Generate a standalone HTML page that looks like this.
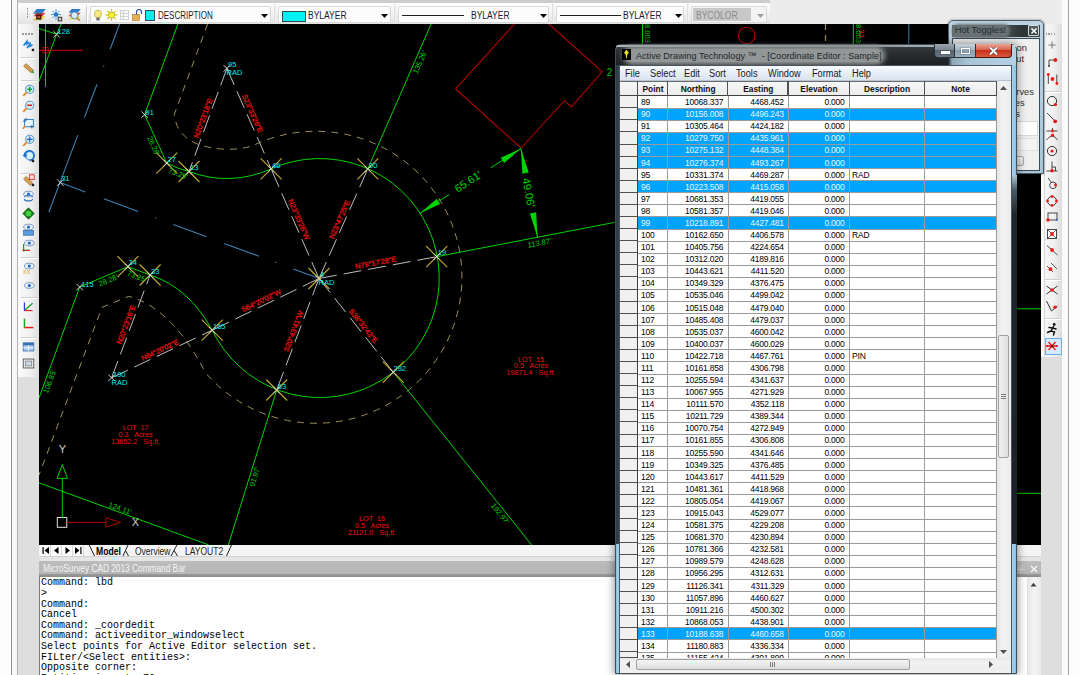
<!DOCTYPE html>
<html><head><meta charset="utf-8"><style>
html,body{margin:0;padding:0;}
body{width:1080px;height:675px;overflow:hidden;position:relative;font-family:'Liberation Sans', sans-serif;}
</style></head><body>
<div style="position:absolute;left:0px;top:0px;width:11px;height:675px;background:#fdfdfd"></div><div style="position:absolute;left:11px;top:0px;width:1px;height:675px;background:#8e8e8e"></div><div style="position:absolute;left:12px;top:0px;width:5px;height:675px;background:#f8f8f8"></div><div style="position:absolute;left:17px;top:0px;width:1px;height:675px;background:#b0b0b0"></div><div style="position:absolute;left:18px;top:0px;width:1044px;height:675px;background:#dedede"></div><div style="position:absolute;left:1062px;top:0px;width:6px;height:675px;background:#fbfbfb"></div><div style="position:absolute;left:1068px;top:0px;width:1px;height:675px;background:#a0a0a0"></div><div style="position:absolute;left:1069px;top:0px;width:11px;height:675px;background:#fdfdfd"></div><div style="position:absolute;left:18px;top:0px;width:1044px;height:24px;background:#ececec"></div><div style="position:absolute;left:18px;top:0px;width:752px;height:3px;background:#cdcdcd"></div><div style="position:absolute;left:18px;top:3px;width:752px;height:21px;background:linear-gradient(#fdfdfd,#f4f4f4 45%,#e2e2e2);border-radius:0 3px 0 0"></div><div style="position:absolute;left:26.5px;top:8.0px;width:1.5px;height:1.5px;background:#9a9a9a"></div><div style="position:absolute;left:26.5px;top:10.7px;width:1.5px;height:1.5px;background:#9a9a9a"></div><div style="position:absolute;left:26.5px;top:13.4px;width:1.5px;height:1.5px;background:#9a9a9a"></div><div style="position:absolute;left:26.5px;top:16.1px;width:1.5px;height:1.5px;background:#9a9a9a"></div><svg style="position:absolute;left:32px;top:7px" width="16" height="15" viewBox="0 0 16 15">
<path d="M1.5 12.5 L4.5 9 L13.5 9 L10.5 12.5Z" fill="#ecd848"/><path d="M1.5 12.5 L10.5 12.5 L10.2 13.3 L1.2 13.3Z" fill="#b89a20"/>
<path d="M1.5 9.2 L4.5 5.8 L13.5 5.8 L10.5 9.2Z" fill="#e43a30"/>
<path d="M1.5 5.8 L4.8 2 L13.8 2 L10.5 5.8Z" fill="#2a7ac8"/><path d="M1.5 5.8 L10.5 5.8 L10.2 6.6 L1.2 6.6Z" fill="#185a9a"/>
<rect x="4.3" y="7.6" width="5" height="4.8" fill="#101010"/><rect x="5.4" y="8.7" width="2.8" height="2.6" fill="#e04030"/></svg><svg style="position:absolute;left:51px;top:8px" width="12" height="14" viewBox="0 0 12 14">
<g stroke="#4aa0e8" stroke-width="1"><line x1="5" y1="1" x2="5" y2="12"/><line x1="0" y1="6.5" x2="10" y2="6.5"/><line x1="1.5" y1="3" x2="8.5" y2="10"/><line x1="8.5" y1="3" x2="1.5" y2="10"/></g>
<circle cx="5" cy="6.5" r="2" fill="#1a70c8"/><rect x="6.8" y="8.8" width="4.4" height="4.6" fill="#303030"/><rect x="7.8" y="9.8" width="2.4" height="2.6" fill="#d8d8d8"/></svg><svg style="position:absolute;left:67px;top:7px" width="15" height="15" viewBox="0 0 15 15">
<path d="M1.5 12.5 L4.5 9 L13.5 9 L10.5 12.5Z" fill="#ecd848"/>
<path d="M1.5 9.2 L4.5 5.8 L13.5 5.8 L10.5 9.2Z" fill="#e43a30"/>
<path d="M1.5 5.8 L4.8 2 L13.8 2 L10.5 5.8Z" fill="#2a7ac8"/>
<circle cx="7.5" cy="8.3" r="3.4" fill="#d8eefa" stroke="#5a90b8" stroke-width="1"/><line x1="9.8" y1="10.6" x2="12.8" y2="13.6" stroke="#c08838" stroke-width="1.8"/></svg><div style="position:absolute;left:86px;top:6px;width:1px;height:17px;background:#c8c8c8;box-shadow:1px 0 0 #fff"></div><div style="position:absolute;left:90px;top:6px;width:181px;height:17px;background:#fcfcfc;border:1px solid #dadada;box-sizing:border-box;border-radius:1px"></div><svg style="position:absolute;left:93px;top:9px" width="62" height="13" viewBox="0 0 62 13">
<ellipse cx="5" cy="5" rx="3.6" ry="4" fill="#f4ec80" stroke="#b0a040" stroke-width="0.6"/><rect x="3.3" y="8.5" width="3.4" height="3" fill="#707070"/>
<g transform="translate(18.5,6)"><circle r="3" fill="#f0e020" stroke="#606000" stroke-width="0.6"/><g stroke="#d8c800" stroke-width="1.2"><line x1="0" y1="-6" x2="0" y2="6"/><line x1="-6" y1="0" x2="6" y2="0"/><line x1="-4.2" y1="-4.2" x2="4.2" y2="4.2"/><line x1="4.2" y1="-4.2" x2="-4.2" y2="4.2"/></g><circle r="2.6" fill="#f8f040"/></g>
<g transform="translate(27,1)" stroke="#c8c8c8" stroke-width="0.8" fill="none"><rect x="0.5" y="0.5" width="8" height="9"/><line x1="0.5" y1="3.5" x2="8.5" y2="3.5"/><line x1="0.5" y1="6.5" x2="8.5" y2="6.5"/><line x1="3.5" y1="0.5" x2="3.5" y2="9.5"/></g>
<g transform="translate(39,0)"><path d="M4.5 6 V3 A2.5 2.5 0 0 1 9.5 3 V5" stroke="#3050a0" stroke-width="1.2" fill="none"/><rect x="0.5" y="5.5" width="7" height="6" fill="#e8b050" stroke="#a07020" stroke-width="0.6"/></g>
<rect x="52.5" y="1.5" width="9" height="10" fill="#00f0f0" stroke="#305060" stroke-width="1"/></svg><div style="position:absolute;left:157.5px;top:9.8px;white-space:nowrap;font-family:'Liberation Sans', sans-serif;font-size:10px;color:#1a1a2a;line-height:12px;transform:scaleX(0.8);transform-origin:0 0">DESCRIPTION</div><svg style="position:absolute;left:261px;top:13.5px" width="7" height="4"><path d="M0 0 L7 0 L3.5 4 Z" fill="#000"/></svg><div style="position:absolute;left:273.5px;top:4px;width:2px;height:19px;background:linear-gradient(90deg,#d8d8d8,#f8f8f8)"></div><div style="position:absolute;left:278px;top:6px;width:113px;height:17px;background:#fcfcfc;border:1px solid #dadada;box-sizing:border-box;border-radius:1px"></div><div style="position:absolute;left:281.5px;top:10.5px;width:22px;height:9px;background:#00f2f2;border:1px solid #2a4a4a"></div><div style="position:absolute;left:307.5px;top:9.8px;white-space:nowrap;font-family:'Liberation Sans', sans-serif;font-size:10px;color:#1a1a2a;line-height:12px;transform:scaleX(0.85);transform-origin:0 0">BYLAYER</div><svg style="position:absolute;left:381px;top:13.5px" width="7" height="4"><path d="M0 0 L7 0 L3.5 4 Z" fill="#000"/></svg><div style="position:absolute;left:393.5px;top:4px;width:2px;height:19px;background:linear-gradient(90deg,#d8d8d8,#f8f8f8)"></div><div style="position:absolute;left:398px;top:6px;width:151px;height:17px;background:#fcfcfc;border:1px solid #dadada;box-sizing:border-box;border-radius:1px"></div><div style="position:absolute;left:402px;top:14.5px;width:62px;height:1px;background:#202020"></div><div style="position:absolute;left:470.5px;top:9.8px;white-space:nowrap;font-family:'Liberation Sans', sans-serif;font-size:10px;color:#1a1a2a;line-height:12px;transform:scaleX(0.85);transform-origin:0 0">BYLAYER</div><svg style="position:absolute;left:539.5px;top:13.5px" width="7" height="4"><path d="M0 0 L7 0 L3.5 4 Z" fill="#000"/></svg><div style="position:absolute;left:551.5px;top:4px;width:2px;height:19px;background:linear-gradient(90deg,#d8d8d8,#f8f8f8)"></div><div style="position:absolute;left:556px;top:6px;width:128px;height:17px;background:#fcfcfc;border:1px solid #dadada;box-sizing:border-box;border-radius:1px"></div><div style="position:absolute;left:560px;top:14.5px;width:61px;height:1px;background:#202020"></div><div style="position:absolute;left:623px;top:9.8px;white-space:nowrap;font-family:'Liberation Sans', sans-serif;font-size:10px;color:#1a1a2a;line-height:12px;transform:scaleX(0.85);transform-origin:0 0">BYLAYER</div><svg style="position:absolute;left:674.5px;top:13.5px" width="7" height="4"><path d="M0 0 L7 0 L3.5 4 Z" fill="#000"/></svg><div style="position:absolute;left:686.5px;top:4px;width:2px;height:19px;background:linear-gradient(90deg,#d8d8d8,#f8f8f8)"></div><div style="position:absolute;left:691px;top:6px;width:76px;height:17px;background:#f4f4f4;border:1px solid #dadada;box-sizing:border-box;border-radius:1px"></div><div style="position:absolute;left:693px;top:8px;width:58px;height:13px;background:#c8c8c8"></div><div style="position:absolute;left:695.5px;top:9.8px;white-space:nowrap;font-family:'Liberation Sans', sans-serif;font-size:10px;color:#8a8a8a;line-height:12px;transform:scaleX(0.85);transform-origin:0 0">BYCOLOR</div><svg style="position:absolute;left:757px;top:13.5px" width="7" height="4"><path d="M0 0 L7 0 L3.5 4 Z" fill="#a0a0a0"/></svg><div style="position:absolute;left:18px;top:24px;width:21px;height:353px;background:linear-gradient(90deg,#fbfbfb,#f0f0f0 60%,#dcdcdc)"></div><div style="position:absolute;left:22px;top:33px;width:1.5px;height:1.5px;background:#9a9a9a"></div><div style="position:absolute;left:25px;top:33px;width:1.5px;height:1.5px;background:#9a9a9a"></div><div style="position:absolute;left:28px;top:33px;width:1.5px;height:1.5px;background:#9a9a9a"></div><div style="position:absolute;left:31px;top:33px;width:1.5px;height:1.5px;background:#9a9a9a"></div><svg style="position:absolute;left:22.0px;top:38.5px" width="13" height="13" viewBox="0 0 16 16"><path d="M2 8 L6 3 L6 6 L9 4" stroke="#2080e0" stroke-width="2" fill="none"/><path d="M6 11 L10 6 L10 9 L13 7" stroke="#2080e0" stroke-width="2" fill="none"/><rect x="12" y="12" width="3" height="3" fill="#202020"/></svg><div style="position:absolute;left:21px;top:57px;width:16px;height:1px;background:#d0d0d0;box-shadow:0 1px 0 #fff"></div><svg style="position:absolute;left:22.0px;top:61.5px" width="13" height="13" viewBox="0 0 16 16"><path d="M2 5 L5 2 L14 10 L11 13 Z" fill="#d4a050" stroke="#8a6020" stroke-width="0.8"/><path d="M11 13 L14 10 L15 14 Z" fill="#40a040"/></svg><div style="position:absolute;left:21px;top:80px;width:16px;height:1px;background:#d0d0d0;box-shadow:0 1px 0 #fff"></div><svg style="position:absolute;left:22.0px;top:83.5px" width="13" height="13" viewBox="0 0 16 16"><circle cx="9.5" cy="6.5" r="5" fill="#d8eef8" stroke="#4a90c8" stroke-width="1.2"/><line x1="6" y1="10" x2="1.5" y2="14.5" stroke="#e08a30" stroke-width="2.2"/><path d="M9.5 3.5 V9.5 M6.5 6.5 H12.5" stroke="#10a030" stroke-width="2"/></svg><svg style="position:absolute;left:22.0px;top:100.0px" width="13" height="13" viewBox="0 0 16 16"><circle cx="9.5" cy="6.5" r="5" fill="#d8eef8" stroke="#4a90c8" stroke-width="1.2"/><line x1="6" y1="10" x2="1.5" y2="14.5" stroke="#e08a30" stroke-width="2.2"/><path d="M6.5 6.5 H12.5" stroke="#e02020" stroke-width="2"/></svg><svg style="position:absolute;left:22.0px;top:116.5px" width="13" height="13" viewBox="0 0 16 16"><rect x="3" y="3" width="11" height="9" fill="#e8f4fc" stroke="#3080c0" stroke-width="1.2"/><path d="M1 5 H5 M5 1 V5 M12 14 V10 M10 12 H15" stroke="#2060a0" stroke-width="1"/><line x1="4" y1="11" x2="1" y2="14.5" stroke="#e08a30" stroke-width="2"/></svg><svg style="position:absolute;left:22.0px;top:133.5px" width="13" height="13" viewBox="0 0 16 16"><circle cx="9.5" cy="6.5" r="5" fill="#d8eef8" stroke="#4a90c8" stroke-width="1.2"/><line x1="6" y1="10" x2="1.5" y2="14.5" stroke="#e08a30" stroke-width="2.2"/><path d="M9.5 3 V10 M6 6.5 H13" stroke="#2060c0" stroke-width="1.5"/></svg><svg style="position:absolute;left:22.0px;top:150.0px" width="13" height="13" viewBox="0 0 16 16"><circle cx="9.5" cy="7" r="5" fill="#d8eef8" stroke="#4a90c8" stroke-width="1.2"/><path d="M3 8 A6 6 0 1 1 9 13" stroke="#1a70d0" stroke-width="2" fill="none"/><path d="M1 6 L5 10 L6 5Z" fill="#1a70d0"/><rect x="12" y="12" width="3" height="3" fill="#202020"/></svg><div style="position:absolute;left:21px;top:173px;width:16px;height:1px;background:#d0d0d0;box-shadow:0 1px 0 #fff"></div><svg style="position:absolute;left:22.0px;top:173.5px" width="13" height="13" viewBox="0 0 16 16"><path d="M2 6 L5 3 L13 11 L10 14 Z" fill="#d4a050" stroke="#8a6020" stroke-width="0.8"/><rect x="9" y="1" width="6" height="6" fill="#f8d8d8" stroke="#d02020" stroke-width="1"/><rect x="12" y="12" width="3" height="3" fill="#202020"/></svg><svg style="position:absolute;left:22.0px;top:190.0px" width="13" height="13" viewBox="0 0 16 16"><ellipse cx="8" cy="5" rx="6" ry="3.5" fill="#e8f0f8" stroke="#4a70a0" stroke-width="0.8"/><circle cx="8" cy="5" r="2" fill="#2a70c0"/><path d="M3 11 A5 2.5 0 1 0 13 11" stroke="#2a70c0" stroke-width="1.5" fill="none"/><path d="M3 9 A5 2.5 0 0 1 13 9" stroke="#2a70c0" stroke-width="1.2" fill="none"/></svg><svg style="position:absolute;left:22.0px;top:206.8px" width="13" height="13" viewBox="0 0 16 16"><path d="M8 1 L15 8 L8 15 L1 8Z" fill="#108010"/><circle cx="8" cy="8" r="3.5" fill="#40d040"/><path d="M8 1 L15 8 L8 15 L1 8Z" fill="none" stroke="#004000" stroke-width="0.8"/></svg><svg style="position:absolute;left:22.0px;top:222.5px" width="13" height="13" viewBox="0 0 16 16"><ellipse cx="8" cy="5" rx="6" ry="3.5" fill="#e8f0f8" stroke="#4a70a0" stroke-width="0.8"/><circle cx="8" cy="5" r="2" fill="#2a70c0"/><rect x="2" y="9" width="12" height="6" fill="#5a9ae0" stroke="#2a5a9a" stroke-width="0.8"/></svg><svg style="position:absolute;left:22.0px;top:239.0px" width="13" height="13" viewBox="0 0 16 16"><ellipse cx="9" cy="5" rx="6" ry="3.5" fill="#e8f0f8" stroke="#4a70a0" stroke-width="0.8"/><circle cx="9" cy="5" r="2" fill="#2a70c0"/><path d="M2 6 V14 H9" stroke="#10a010" stroke-width="1.4" fill="none"/><path d="M5 14 H10" stroke="#e02020" stroke-width="1.4"/><circle cx="2" cy="14" r="1.4" fill="#e02020"/></svg><div style="position:absolute;left:21px;top:257px;width:16px;height:1px;background:#d0d0d0;box-shadow:0 1px 0 #fff"></div><svg style="position:absolute;left:22.0px;top:261.5px" width="13" height="13" viewBox="0 0 16 16"><ellipse cx="9" cy="5" rx="6" ry="3.5" fill="#e8f0f8" stroke="#4a70a0" stroke-width="0.8"/><circle cx="9" cy="5" r="2" fill="#2a70c0"/><text x="1" y="15" font-size="7" fill="#e0a020" font-family="Liberation Sans">XX</text></svg><svg style="position:absolute;left:22.0px;top:278.5px" width="13" height="13" viewBox="0 0 16 16"><ellipse cx="9" cy="8" rx="6" ry="3.5" fill="#e8f0f8" stroke="#4a70a0" stroke-width="0.8"/><circle cx="9" cy="8" r="2" fill="#2a70c0"/></svg><div style="position:absolute;left:21px;top:297px;width:16px;height:1px;background:#d0d0d0;box-shadow:0 1px 0 #fff"></div><svg style="position:absolute;left:22.0px;top:300.0px" width="13" height="13" viewBox="0 0 16 16"><path d="M3 13 L13 4" stroke="#10a010" stroke-width="1.5"/><path d="M3 13 H13" stroke="#e02020" stroke-width="1.5"/><path d="M3 13 V3" stroke="#2040e0" stroke-width="1.5"/></svg><svg style="position:absolute;left:22.0px;top:316.5px" width="13" height="13" viewBox="0 0 16 16"><path d="M3 2 V13" stroke="#10b010" stroke-width="1.8"/><path d="M3 13 H14" stroke="#e02020" stroke-width="1.8"/></svg><div style="position:absolute;left:21px;top:337px;width:16px;height:1px;background:#d0d0d0;box-shadow:0 1px 0 #fff"></div><svg style="position:absolute;left:22.0px;top:340.0px" width="13" height="13" viewBox="0 0 16 16"><rect x="1.5" y="3.5" width="13" height="10" fill="#a8c8f0" stroke="#3a70b0" stroke-width="1"/><rect x="1.5" y="3.5" width="13" height="3" fill="#3a70b0"/><line x1="1.5" y1="9.5" x2="14.5" y2="9.5" stroke="#fff"/><line x1="8" y1="6.5" x2="8" y2="13.5" stroke="#fff"/></svg><svg style="position:absolute;left:22.0px;top:356.5px" width="13" height="13" viewBox="0 0 16 16"><rect x="1.5" y="2.5" width="13" height="11" fill="#f0f0f0" stroke="#404040" stroke-width="1"/><rect x="4" y="5" width="8" height="6" fill="#c8d8e8" stroke="#707070" stroke-width="0.8"/></svg><div style="position:absolute;left:1041px;top:24px;width:21px;height:333px;background:linear-gradient(90deg,#fbfbfb,#f0f0f0 60%,#dcdcdc)"></div><div style="position:absolute;left:1044px;top:24px;width:1px;height:333px;background:#d8d8d8"></div><div style="position:absolute;left:1045.5px;top:33.2px;width:1.4px;height:1.4px;background:#a0a0a0"></div><div style="position:absolute;left:1048.3px;top:33.2px;width:1.4px;height:1.4px;background:#a0a0a0"></div><div style="position:absolute;left:1051.1px;top:33.2px;width:1.4px;height:1.4px;background:#a0a0a0"></div><div style="position:absolute;left:1053.9px;top:33.2px;width:1.4px;height:1.4px;background:#a0a0a0"></div><svg style="position:absolute;left:1045.2px;top:38px" width="14" height="14" viewBox="-7 -7 14 14"><path d="M0 -3.5 V3.5 M-3.5 0 H3.5" stroke="#777" stroke-width="1"/></svg><svg style="position:absolute;left:1045.2px;top:55.3px" width="14" height="14" viewBox="-7 -7 14 14"><path d="M-3 4 V-2 H2" stroke="#333" stroke-width="0.9" fill="none"/><circle cx="-3" cy="4" r="0.9" fill="#333"/><circle cx="3.4" cy="-2" r="1.9" fill="#f01818"/></svg><svg style="position:absolute;left:1045.2px;top:72px" width="14" height="14" viewBox="-7 -7 14 14"><path d="M-3.7 -4.5 V5 M4.8 -4.5 V5" stroke="#333" stroke-width="0.9"/><circle cx="-3.7" cy="-4.5" r="1.4" fill="#f01818"/><circle cx="0.5" cy="0" r="1.9" fill="#f01818"/><circle cx="4.9" cy="4.5" r="1.4" fill="#f01818"/></svg><div style="position:absolute;left:1045px;top:91px;width:16px;height:1px;background:#d0d0d0;box-shadow:0 1px 0 #fff"></div><svg style="position:absolute;left:1045.2px;top:94.3px" width="14" height="14" viewBox="-7 -7 14 14"><circle cx="0" cy="0" r="4.6" stroke="#333" stroke-width="1" fill="none"/><circle cx="3.4" cy="3.6" r="1.7" fill="#f01818"/></svg><svg style="position:absolute;left:1045.2px;top:111px" width="14" height="14" viewBox="-7 -7 14 14"><path d="M-5 -5 L3.5 3.5" stroke="#333" stroke-width="0.9"/><circle cx="3.2" cy="3.3" r="1.9" fill="#f01818"/></svg><svg style="position:absolute;left:1045.2px;top:127.19999999999999px" width="14" height="14" viewBox="-7 -7 14 14"><path d="M-5.5 -3 H5.5 M0.5 -6 V-3 M-5.5 6 Q0.5 -2 5.5 6" stroke="#333" stroke-width="0.9" fill="none"/><circle cx="0.5" cy="-3" r="1.4" fill="#f01818"/><circle cx="0.5" cy="1.2" r="1.6" fill="#f01818"/></svg><svg style="position:absolute;left:1045.2px;top:143.7px" width="14" height="14" viewBox="-7 -7 14 14"><circle cx="0" cy="0" r="4.6" stroke="#333" stroke-width="1" fill="none"/><circle cx="0" cy="0" r="1.6" fill="#f01818"/></svg><svg style="position:absolute;left:1045.2px;top:159.7px" width="14" height="14" viewBox="-7 -7 14 14"><path d="M-5.5 4 H5.5 M0 -5.5 V4 M0 0 H3.5 V4" stroke="#333" stroke-width="0.9" fill="none"/><circle cx="0" cy="3.8" r="1.8" fill="#f01818"/></svg><svg style="position:absolute;left:1045.2px;top:175.7px" width="14" height="14" viewBox="-7 -7 14 14"><path d="M-4 -5 L-0.5 -0.5" stroke="#333" stroke-width="0.9"/><circle cx="1" cy="2.3" r="3.3" stroke="#333" stroke-width="0.9" fill="none"/><circle cx="3.5" cy="2" r="1.4" fill="#f01818"/></svg><svg style="position:absolute;left:1045.2px;top:194.3px" width="14" height="14" viewBox="-7 -7 14 14"><circle cx="0" cy="0" r="4.5" stroke="#333" stroke-width="1" fill="none"/><circle cx="0" cy="-4.5" r="1.4" fill="#f01818"/><circle cx="4.5" cy="0" r="1.4" fill="#f01818"/><circle cx="0" cy="4.5" r="1.4" fill="#f01818"/><circle cx="-4.5" cy="0" r="1.4" fill="#f01818"/></svg><svg style="position:absolute;left:1045.2px;top:210.3px" width="14" height="14" viewBox="-7 -7 14 14"><rect x="-4" y="-4" width="9" height="7" stroke="#333" stroke-width="0.9" fill="none"/><rect x="4" y="2" width="1.5" height="1.5" fill="#2050c0"/><circle cx="-4" cy="3" r="1.8" fill="#f01818"/></svg><svg style="position:absolute;left:1045.2px;top:227.2px" width="14" height="14" viewBox="-7 -7 14 14"><rect x="-4.5" y="-4.5" width="9" height="9" stroke="#333" stroke-width="0.9" fill="#fff"/><path d="M-4.5 -4.5 L4.5 4.5 M4.5 -4.5 L-4.5 4.5" stroke="#333" stroke-width="0.7"/><circle cx="0" cy="0" r="1.9" fill="#f01818"/></svg><svg style="position:absolute;left:1045.2px;top:243.2px" width="14" height="14" viewBox="-7 -7 14 14"><path d="M-5 -4.5 L5.5 5" stroke="#333" stroke-width="0.9"/><circle cx="0" cy="0" r="1.9" fill="#f01818"/></svg><svg style="position:absolute;left:1045.2px;top:260.8px" width="14" height="14" viewBox="-7 -7 14 14"><path d="M-5 -2 L1 4 M-1 -5 L5 1" stroke="#333" stroke-width="0.8"/><circle cx="-1.5" cy="1.2" r="1.9" fill="#f01818"/></svg><div style="position:absolute;left:1045px;top:279.3px;width:16px;height:1px;background:#d0d0d0;box-shadow:0 1px 0 #fff"></div><svg style="position:absolute;left:1045.2px;top:283px" width="14" height="14" viewBox="-7 -7 14 14"><path d="M-5.5 -4 L5.5 4 M-5.5 4 L5.5 -4" stroke="#333" stroke-width="1"/><circle cx="0" cy="0" r="1.8" fill="#f01818"/></svg><svg style="position:absolute;left:1045.2px;top:299px" width="14" height="14" viewBox="-7 -7 14 14"><path d="M-5.5 -5 L-0.5 5 L5.5 0" stroke="#333" stroke-width="1" fill="none"/><circle cx="3" cy="1.2" r="1.8" fill="#f01818"/></svg><div style="position:absolute;left:1045px;top:318.4px;width:16px;height:1px;background:#d0d0d0;box-shadow:0 1px 0 #fff"></div><svg style="position:absolute;left:1045.2px;top:322.1px" width="14" height="14" viewBox="-7 -7 14 14"><circle cx="2.2" cy="-4.6" r="1.4" fill="#111"/><path d="M1.5 -2.5 L-1 2 L-4.5 3.5 M-1 2 L2.5 3 L1.5 6 M0.5 -1 L4 0 M0.5 -1 L-3 -1.5" stroke="#111" stroke-width="1.5" fill="none" stroke-linecap="round"/></svg><div style="position:absolute;left:1044.5px;top:338px;width:17px;height:17px;background:#d6eafb;border:1px solid #6ab0ee;box-sizing:border-box"></div><svg style="position:absolute;left:1045.2px;top:339.2px" width="14" height="14" viewBox="-7 -7 14 14"><path d="M-5.5 0 H5.5 M-3.5 -4 L3.5 4 M3.5 -4 L-3.5 4" stroke="#f01818" stroke-width="1.3"/><circle cx="0" cy="0" r="1.3" fill="#600"/><circle cx="-5" cy="0" r="1.1" fill="#f01818"/><circle cx="5" cy="0" r="1.1" fill="#f01818"/></svg><div style="position:absolute;left:39px;top:24px;width:1002px;height:520.5px;background:#000;overflow:hidden"><svg width="1002" height="521" viewBox="39 24 1002 521" style="position:absolute;left:0;top:0;font-family:'Liberation Sans',sans-serif"><path d="M207.6 24 L174.2 114.7 Q177 137 200 145 Q228 153 252 146 A146 146 0 1 1 205.7 373 Q172 308 128.8 296.3 L102 307.4 L39 475" stroke="#9c8f5a" stroke-width="1" fill="none" stroke-dasharray="7 6"/><line x1="119.6" y1="24" x2="110.2" y2="49" stroke="#3f7fae" stroke-width="1.1" /><line x1="97.0" y1="84.2" x2="84.4" y2="117.5" stroke="#3f7fae" stroke-width="1.1" /><line x1="77.8" y1="135.1" x2="48.8" y2="212.2" stroke="#3f7fae" stroke-width="1.1" /><circle cx="103.7" cy="66.2" r="0.7" fill="#3f7fae"/><line x1="60.3" y1="182.6" x2="85.3" y2="191.9" stroke="#3f7fae" stroke-width="1.1" /><line x1="103.8" y1="198.7" x2="138.1" y2="211.4" stroke="#3f7fae" stroke-width="1.1" /><line x1="173.3" y1="224.5" x2="206.6" y2="236.8" stroke="#3f7fae" stroke-width="1.1" /><line x1="224.2" y1="243.4" x2="258.9" y2="256.2" stroke="#3f7fae" stroke-width="1.1" /><line x1="293.3" y1="269.0" x2="316.7" y2="277.6" stroke="#3f7fae" stroke-width="1.1" /><circle cx="155.7" cy="218.0" r="0.7" fill="#3f7fae"/><circle cx="275.6" cy="262.4" r="0.7" fill="#3f7fae"/><line x1="226.9" y1="68.4" x2="189" y2="171.5" stroke="#bdbdbd" stroke-width="1" stroke-dasharray="18 7" /><line x1="226.9" y1="68.4" x2="271.1" y2="168.9" stroke="#bdbdbd" stroke-width="1" stroke-dasharray="18 7" /><line x1="319" y1="278.5" x2="271.1" y2="168.9" stroke="#bdbdbd" stroke-width="1" stroke-dasharray="18 7" /><line x1="319" y1="278.5" x2="367.8" y2="168.9" stroke="#bdbdbd" stroke-width="1" stroke-dasharray="18 7" /><line x1="319" y1="278.5" x2="436.7" y2="256.7" stroke="#bdbdbd" stroke-width="1" stroke-dasharray="18 7" /><line x1="319" y1="278.5" x2="212.2" y2="330.2" stroke="#bdbdbd" stroke-width="1" stroke-dasharray="18 7" /><line x1="319" y1="278.5" x2="276.7" y2="390" stroke="#bdbdbd" stroke-width="1" stroke-dasharray="18 7" /><line x1="319" y1="278.5" x2="393.3" y2="372.2" stroke="#bdbdbd" stroke-width="1" stroke-dasharray="18 7" /><line x1="111.6" y1="377.8" x2="150.1" y2="275" stroke="#bdbdbd" stroke-width="1" stroke-dasharray="18 7" /><line x1="111.6" y1="377.8" x2="212.2" y2="330.2" stroke="#bdbdbd" stroke-width="1" stroke-dasharray="18 7" /><path d="M45.5 24 L45.5 87" stroke="#00d400" stroke-width="1" fill="none"/><path d="M39 28.6 L56.6 34.2" stroke="#00d400" stroke-width="1" fill="none"/><path d="M61.2 24 L56.6 34.2 L39 81.4" stroke="#00d400" stroke-width="1" fill="none"/><path d="M177.9 24 L144.6 114.7 L166.8 163.1 Q178 169 189 171.5 Q229.95 186.8 271.1 168.9" stroke="#00d400" stroke-width="1" fill="none"/><path d="M271.1 168.9 A119.5 119.5 0 1 1 212.2 330.2" stroke="#00d400" stroke-width="1" fill="none"/><path d="M212.2 330.2 Q188.85 287.5 150.1 275 L127.9 266.7 L79.7 287 L39 398" stroke="#00d400" stroke-width="1" fill="none"/><path d="M367.8 168.9 L431.1 24" stroke="#00d400" stroke-width="1" fill="none"/><path d="M436.7 256.7 L640 217.5" stroke="#00d400" stroke-width="1" fill="none"/><path d="M393.3 372.2 L531.7 545" stroke="#00d400" stroke-width="1" fill="none"/><path d="M276.7 390 L228.3 545" stroke="#00d400" stroke-width="1" fill="none"/><path d="M39 482.8 L208.8 545" stroke="#00d400" stroke-width="1" fill="none"/><path d="M519 19 L455.6 88.9 L521.1 148 L564.4 100.7 L571.6 106.7 L602.2 71.8 L543.3 19" stroke="#b00000" stroke-width="1.1" fill="none"/><path d="M39 50.3 L82.9 50.3" stroke="#b00000" stroke-width="1.2" fill="none"/><rect x="43" y="47.6" width="5.2" height="5.2" stroke="#b00000" stroke-width="1" fill="none"/><line x1="520.9" y1="148.5" x2="490.6" y2="167.9" stroke="#00d400" stroke-width="1" /><line x1="449.3" y1="194.5" x2="420" y2="213.3" stroke="#00d400" stroke-width="1" /><path d="M520.9 148.5 L500.7 157.7 L504.1 163.1 Z" fill="#00d400"/><path d="M420 213.3 L440.2 204.1 L436.8 198.7 Z" fill="#00d400"/><line x1="520.9" y1="148.5" x2="525.1" y2="170.7" stroke="#00d400" stroke-width="1" /><line x1="533.3" y1="214.3" x2="537.6" y2="237.4" stroke="#00d400" stroke-width="1" /><path d="M520.9 148.5 L522.4 173.7 L528.7 172.5 Z" fill="#00d400"/><path d="M537.6 237.4 L536.1 212.2 L529.8 213.4 Z" fill="#00d400"/><text x="468" y="181.5" fill="#00d400" font-size="11" text-anchor="middle" dominant-baseline="central" transform="rotate(-32.7093889146237 468 181.5)" >65.61'</text><text x="528.8" y="192.5" fill="#00d400" font-size="11" text-anchor="middle" dominant-baseline="central" transform="rotate(79.4 528.8 192.5)" >49.06'</text><path d="M156.3 152.6 L177.3 173.6 M177.3 152.6 L156.3 173.6" stroke="#c0aa2a" stroke-width="1.15"/><path d="M178.5 161.0 L199.5 182.0 M199.5 161.0 L178.5 182.0" stroke="#c0aa2a" stroke-width="1.15"/><path d="M260.6 158.4 L281.6 179.4 M281.6 158.4 L260.6 179.4" stroke="#c0aa2a" stroke-width="1.15"/><path d="M357.3 158.4 L378.3 179.4 M378.3 158.4 L357.3 179.4" stroke="#c0aa2a" stroke-width="1.15"/><path d="M426.2 246.2 L447.2 267.2 M447.2 246.2 L426.2 267.2" stroke="#c0aa2a" stroke-width="1.15"/><path d="M382.8 361.7 L403.8 382.7 M403.8 361.7 L382.8 382.7" stroke="#c0aa2a" stroke-width="1.15"/><path d="M266.2 379.5 L287.2 400.5 M287.2 379.5 L266.2 400.5" stroke="#c0aa2a" stroke-width="1.15"/><path d="M201.7 319.7 L222.7 340.7 M222.7 319.7 L201.7 340.7" stroke="#c0aa2a" stroke-width="1.15"/><path d="M139.6 264.5 L160.6 285.5 M160.6 264.5 L139.6 285.5" stroke="#c0aa2a" stroke-width="1.15"/><path d="M117.4 256.2 L138.4 277.2 M138.4 256.2 L117.4 277.2" stroke="#c0aa2a" stroke-width="1.15"/><path d="M308.5 268.0 L329.5 289.0 M329.5 268.0 L308.5 289.0" stroke="#c0aa2a" stroke-width="1.15"/><path d="M53.4 31.000000000000004 L59.800000000000004 37.400000000000006 M59.800000000000004 31.000000000000004 L53.4 37.400000000000006" stroke="#d8d8d8" stroke-width="1"/><path d="M141.4 111.5 L147.79999999999998 117.9 M147.79999999999998 111.5 L141.4 117.9" stroke="#d8d8d8" stroke-width="1"/><path d="M57.099999999999994 179.4 L63.5 185.79999999999998 M63.5 179.4 L57.099999999999994 185.79999999999998" stroke="#d8d8d8" stroke-width="1"/><path d="M223.70000000000002 65.2 L230.1 71.60000000000001 M230.1 65.2 L223.70000000000002 71.60000000000001" stroke="#d8d8d8" stroke-width="1"/><path d="M76.5 283.8 L82.9 290.2 M82.9 283.8 L76.5 290.2" stroke="#d8d8d8" stroke-width="1"/><path d="M108.39999999999999 374.6 L114.8 381.0 M114.8 374.6 L108.39999999999999 381.0" stroke="#d8d8d8" stroke-width="1"/><path d="M315.8 275.3 L322.2 281.7 M322.2 275.3 L315.8 281.7" stroke="#d8d8d8" stroke-width="1"/><path d="M163.60000000000002 159.9 L170.0 166.29999999999998 M170.0 159.9 L163.60000000000002 166.29999999999998" stroke="#d8d8d8" stroke-width="1"/><path d="M185.8 168.3 L192.2 174.7 M192.2 168.3 L185.8 174.7" stroke="#d8d8d8" stroke-width="1"/><path d="M267.90000000000003 165.70000000000002 L274.3 172.1 M274.3 165.70000000000002 L267.90000000000003 172.1" stroke="#d8d8d8" stroke-width="1"/><path d="M364.6 165.70000000000002 L371.0 172.1 M371.0 165.70000000000002 L364.6 172.1" stroke="#d8d8d8" stroke-width="1"/><path d="M433.5 253.5 L439.9 259.9 M439.9 253.5 L433.5 259.9" stroke="#d8d8d8" stroke-width="1"/><path d="M390.1 369.0 L396.5 375.4 M396.5 369.0 L390.1 375.4" stroke="#d8d8d8" stroke-width="1"/><path d="M273.5 386.8 L279.9 393.2 M279.9 386.8 L273.5 393.2" stroke="#d8d8d8" stroke-width="1"/><path d="M209.0 327.0 L215.39999999999998 333.4 M215.39999999999998 327.0 L209.0 333.4" stroke="#d8d8d8" stroke-width="1"/><path d="M146.9 271.8 L153.29999999999998 278.2 M153.29999999999998 271.8 L146.9 278.2" stroke="#d8d8d8" stroke-width="1"/><path d="M124.7 263.5 L131.1 269.9 M131.1 263.5 L124.7 269.9" stroke="#d8d8d8" stroke-width="1"/><text x="57.5" y="31.8" fill="#00eaf4" font-size="7.5" text-anchor="start" dominant-baseline="central" >128</text><text x="145.5" y="112.5" fill="#00eaf4" font-size="7.5" text-anchor="start" dominant-baseline="central" >91</text><text x="228" y="64.4" fill="#00eaf4" font-size="7.5" text-anchor="start" dominant-baseline="central" >95</text><text x="226.5" y="72.5" fill="#00eaf4" font-size="7.5" text-anchor="start" dominant-baseline="central" >RAD</text><text x="61.2" y="178.9" fill="#00eaf4" font-size="7.5" text-anchor="start" dominant-baseline="central" >31</text><text x="167.5" y="159.5" fill="#00eaf4" font-size="7.5" text-anchor="start" dominant-baseline="central" >27</text><text x="190" y="167.8" fill="#00eaf4" font-size="7.5" text-anchor="start" dominant-baseline="central" >13</text><text x="272" y="165.2" fill="#00eaf4" font-size="7.5" text-anchor="start" dominant-baseline="central" >46</text><text x="369" y="165.6" fill="#00eaf4" font-size="7.5" text-anchor="start" dominant-baseline="central" >90</text><text x="437.8" y="252.9" fill="#00eaf4" font-size="7.5" text-anchor="start" dominant-baseline="central" >19</text><text x="318.5" y="282.5" fill="#00eaf4" font-size="7.5" text-anchor="start" dominant-baseline="central" >RAD</text><text x="320" y="274.4" fill="#00eaf4" font-size="7.5" text-anchor="start" dominant-baseline="central" >4</text><text x="213" y="326.9" fill="#00eaf4" font-size="7.5" text-anchor="start" dominant-baseline="central" >165</text><text x="277.8" y="386.7" fill="#00eaf4" font-size="7.5" text-anchor="start" dominant-baseline="central" >63</text><text x="393.5" y="368.9" fill="#00eaf4" font-size="7.5" text-anchor="start" dominant-baseline="central" >292</text><text x="81.6" y="284.3" fill="#00eaf4" font-size="7.5" text-anchor="start" dominant-baseline="central" >115</text><text x="128.5" y="262.8" fill="#00eaf4" font-size="7.5" text-anchor="start" dominant-baseline="central" >34</text><text x="151" y="271.3" fill="#00eaf4" font-size="7.5" text-anchor="start" dominant-baseline="central" >33</text><text x="113" y="374.7" fill="#00eaf4" font-size="7.5" text-anchor="start" dominant-baseline="central" >190</text><text x="111.6" y="382.4" fill="#00eaf4" font-size="7.5" text-anchor="start" dominant-baseline="central" >RAD</text><text x="203.1" y="118.2" fill="#f01010" stroke="#f01010" stroke-width="0.25" font-size="7.3" text-anchor="middle" dominant-baseline="central" transform="rotate(-69.8 203.1 118.2)">N20°23'18"E</text><text x="252.4" y="113.5" fill="#f01010" stroke="#f01010" stroke-width="0.25" font-size="7.3" text-anchor="middle" dominant-baseline="central" transform="rotate(66.3 252.4 113.5)">S23°33'26"E</text><text x="298.9" y="219.4" fill="#f01010" stroke="#f01010" stroke-width="0.25" font-size="7.3" text-anchor="middle" dominant-baseline="central" transform="rotate(66.4 298.9 219.4)">N23°33'26"W</text><text x="339.6" y="219.4" fill="#f01010" stroke="#f01010" stroke-width="0.25" font-size="7.3" text-anchor="middle" dominant-baseline="central" transform="rotate(-66.0 339.6 219.4)">N23°47'25"E</text><text x="375.7" y="262.7" fill="#f01010" stroke="#f01010" stroke-width="0.25" font-size="7.3" text-anchor="middle" dominant-baseline="central" transform="rotate(-10.5 375.7 262.7)">N79°17'28"E</text><text x="261.2" y="300.7" fill="#f01010" stroke="#f01010" stroke-width="0.25" font-size="7.3" text-anchor="middle" dominant-baseline="central" transform="rotate(-25.8 261.2 300.7)">S64°20'02"W</text><text x="293.4" y="331.3" fill="#f01010" stroke="#f01010" stroke-width="0.25" font-size="7.3" text-anchor="middle" dominant-baseline="central" transform="rotate(-69.2 293.4 331.3)">S20°43'41"W</text><text x="363.2" y="325.9" fill="#f01010" stroke="#f01010" stroke-width="0.25" font-size="7.3" text-anchor="middle" dominant-baseline="central" transform="rotate(51.6 363.2 325.9)">S38°32'43"E</text><text x="126.0" y="324.6" fill="#f01010" stroke="#f01010" stroke-width="0.25" font-size="7.3" text-anchor="middle" dominant-baseline="central" transform="rotate(-69.5 126.0 324.6)">N20°23'16"E</text><text x="160.2" y="350.4" fill="#f01010" stroke="#f01010" stroke-width="0.25" font-size="7.1" text-anchor="middle" dominant-baseline="central" transform="rotate(-25.3 160.2 350.4)">N64°20'02"E</text><text x="153.4" y="145.8" fill="#00d400" font-size="7.5" text-anchor="middle" dominant-baseline="central" transform="rotate(65.36013253124514 153.4 145.8)" >28.28'</text><text x="178.0" y="173.8" fill="#00d400" font-size="7.5" text-anchor="middle" dominant-baseline="central" transform="rotate(20.725558865560565 178.0 173.8)" >73.25'</text><text x="108.2" y="280.4" fill="#00d400" font-size="7.5" text-anchor="middle" dominant-baseline="central" transform="rotate(-22.838968199374477 108.2 280.4)" >28.28'</text><text x="136.9" y="276.5" fill="#00d400" font-size="7.5" text-anchor="middle" dominant-baseline="central" transform="rotate(20.499456813772973 136.9 276.5)" >73.25'</text><text x="419.9" y="62.2" fill="#00d400" font-size="7.5" text-anchor="middle" dominant-baseline="central" transform="rotate(-66.40174436270445 419.9 62.2)" >135.26'</text><text x="539.5" y="243.0" fill="#00d400" font-size="7.5" text-anchor="middle" dominant-baseline="central" transform="rotate(-10.91374745528912 539.5 243.0)" >113.87'</text><text x="500.1" y="513.6" fill="#00d400" font-size="7.5" text-anchor="middle" dominant-baseline="central" transform="rotate(51.30785778799191 500.1 513.6)" >192.97'</text><text x="254.9" y="476.7" fill="#00d400" font-size="7.5" text-anchor="middle" dominant-baseline="central" transform="rotate(-72.65860485203812 254.9 476.7)" >91.97'</text><text x="120.1" y="508.5" fill="#00d400" font-size="7.5" text-anchor="middle" dominant-baseline="central" transform="rotate(20.118454894139326 120.1 508.5)" >124.11'</text><text x="49.8" y="381.4" fill="#00d400" font-size="7.5" text-anchor="middle" dominant-baseline="central" transform="rotate(-69.52464489035309 49.8 381.4)" >106.85'</text><text x="609.5" y="72" fill="#00d400" font-size="10" text-anchor="middle" dominant-baseline="central" >2</text><text x="135.6" y="427" fill="#f01010" font-size="7.2" text-anchor="middle" dominant-baseline="central" xml:space="preserve">LOT  17</text><text x="135.6" y="434.8" fill="#f01010" font-size="7.2" text-anchor="middle" dominant-baseline="central" xml:space="preserve">0.3   Acres</text><text x="135.6" y="441.6" fill="#f01010" font-size="7.2" text-anchor="middle" dominant-baseline="central" xml:space="preserve">13652.2   Sq.ft.</text><text x="372" y="518.3" fill="#f01010" font-size="7.2" text-anchor="middle" dominant-baseline="central" xml:space="preserve">LOT  16</text><text x="372" y="525.6" fill="#f01010" font-size="7.2" text-anchor="middle" dominant-baseline="central" xml:space="preserve">0.5   Acres</text><text x="372" y="532.3" fill="#f01010" font-size="7.2" text-anchor="middle" dominant-baseline="central" xml:space="preserve">21121.0   Sq.ft.</text><text x="531" y="359" fill="#f01010" font-size="7.2" text-anchor="middle" dominant-baseline="central" xml:space="preserve">LOT  15</text><text x="531" y="365.7" fill="#f01010" font-size="7.2" text-anchor="middle" dominant-baseline="central" xml:space="preserve">0.5   Acres</text><text x="531" y="372.3" fill="#f01010" font-size="7.2" text-anchor="middle" dominant-baseline="central" xml:space="preserve">19871.4   Sq.ft.</text><rect x="57.3" y="517.5" width="9.5" height="9.8" stroke="#e0e0e0" stroke-width="1" fill="none"/><path d="M62.3 517.5 L62.3 478.4" stroke="#00d400" stroke-width="1" fill="none"/><path d="M62.3 464.6 L57.1 478.4 L67.5 478.4 Z" stroke="#00d400" stroke-width="1" fill="none"/><path d="M66.8 522.4 L105.9 522.4" stroke="#b00000" stroke-width="1" fill="none"/><path d="M120.7 522.4 L105.9 517.8 L105.9 527 Z" stroke="#b00000" stroke-width="1" fill="none"/><text x="62.3" y="449" fill="#d0d0d0" font-size="11" text-anchor="middle" dominant-baseline="central" >Y</text><text x="135.5" y="522.4" fill="#d0d0d0" font-size="11" text-anchor="middle" dominant-baseline="central" >X</text><path d="M642.5 24 L642.5 44" stroke="#00d400" stroke-width="1" fill="none"/><text x="647" y="33.5" fill="#00d400" font-size="7.6" text-anchor="middle" dominant-baseline="central" transform="rotate(90 647 33.5)" >8.003</text><circle cx="746.7" cy="35.5" r="8.3" stroke="#b00000" stroke-width="1.1" fill="none"/><path d="M825.5 24 L825.5 44" stroke="#9c8f5a" stroke-width="1.2" fill="none" stroke-dasharray="6 5"/><path d="M853.3 24 L853.3 44" stroke="#00d400" stroke-width="1" fill="none"/><text x="861" y="33.5" fill="#f01010" font-size="7.6" text-anchor="middle" dominant-baseline="central" transform="rotate(90 861 33.5)" >33</text><text x="858" y="33.5" fill="#00d400" font-size="7.6" text-anchor="middle" dominant-baseline="central" transform="rotate(90 858 33.5)" >8.003</text><path d="M908.8 24 L908.8 44" stroke="#3f7fae" stroke-width="1" fill="none"/><path d="M1017 308.8 L1041 308.8" stroke="#00d400" stroke-width="1" fill="none"/><path d="M1017 493.3 L1041 493.3" stroke="#00d400" stroke-width="1" fill="none"/></svg></div><div style="position:absolute;left:39px;top:544.5px;width:1002px;height:12px;background:#f4f4f4;border-bottom:1px solid #d0d0d0;box-sizing:border-box"></div><div style="position:absolute;left:40px;top:545px;width:11px;height:11px;background:#fdfdfd;border-right:1px solid #d8d8d8;box-sizing:border-box"></div><svg style="position:absolute;left:40px;top:545px" width="11" height="11" viewBox="0 0 11 11"><rect x="2.5" y="2" width="1.2" height="7" fill="#000"/><path d="M9 2 L4.5 5.5 L9 9Z" fill="#000"/></svg><div style="position:absolute;left:51px;top:545px;width:11px;height:11px;background:#fdfdfd;border-right:1px solid #d8d8d8;box-sizing:border-box"></div><svg style="position:absolute;left:51px;top:545px" width="11" height="11" viewBox="0 0 11 11"><path d="M7.5 2 L3 5.5 L7.5 9Z" fill="#000"/></svg><div style="position:absolute;left:62px;top:545px;width:11px;height:11px;background:#fdfdfd;border-right:1px solid #d8d8d8;box-sizing:border-box"></div><svg style="position:absolute;left:62px;top:545px" width="11" height="11" viewBox="0 0 11 11"><path d="M3.5 2 L8 5.5 L3.5 9Z" fill="#000"/></svg><div style="position:absolute;left:73px;top:545px;width:11px;height:11px;background:#fdfdfd;border-right:1px solid #d8d8d8;box-sizing:border-box"></div><svg style="position:absolute;left:73px;top:545px" width="11" height="11" viewBox="0 0 11 11"><path d="M2 2 L6.5 5.5 L2 9Z" fill="#000"/><rect x="7.3" y="2" width="1.2" height="7" fill="#000"/></svg><svg style="position:absolute;left:85px;top:544px" width="160" height="13" viewBox="0 0 160 13">
<path d="M4 0.5 L9.5 12 M38 12 L43 1 M40.5 6.5 L43.5 12 M86 12 L92 1 M89 6.5 L92.5 12 M141.5 12 L146.5 1" stroke="#202020" stroke-width="1" fill="none"/></svg><div style="position:absolute;left:96px;top:545.6px;white-space:nowrap;font-family:'Liberation Sans', sans-serif;font-size:10px;font-weight:bold;color:#000;line-height:12px;transform:scaleX(0.86);transform-origin:0 0">Model</div><div style="position:absolute;left:134.5px;top:545.6px;white-space:nowrap;font-family:'Liberation Sans', sans-serif;font-size:10px;color:#1a1a1a;line-height:12px;transform:scaleX(0.85);transform-origin:0 0">Overview</div><div style="position:absolute;left:184.5px;top:545.6px;white-space:nowrap;font-family:'Liberation Sans', sans-serif;font-size:10px;color:#1a1a1a;line-height:12px;transform:scaleX(0.85);transform-origin:0 0">LAYOUT2</div><div style="position:absolute;left:39px;top:556.5px;width:1002px;height:4.5px;background:#e6e6e6"></div><div style="position:absolute;left:39px;top:561px;width:1002px;height:16px;background:linear-gradient(#bcbcbc,#b6b6b6 80%,#9a9a9a 82%,#8c8c8c 100%)"></div><div style="position:absolute;left:42.5px;top:563.2px;white-space:nowrap;font-family:'Liberation Sans', sans-serif;font-size:10px;color:#f4f4f4;line-height:12px;transform:scaleX(0.83);transform-origin:0 0">MicroSurvey CAD 2013 Command Bar</div><svg style="position:absolute;left:1017px;top:563.5px" width="8" height="9"><path d="M2 1 V5 M5 1 V5 M0.5 5.5 H7.5 M3.5 5.5 V8.5" stroke="#dcdcdc" stroke-width="1"/></svg><svg style="position:absolute;left:1029.5px;top:564.5px" width="8" height="8"><path d="M1 1 L7 7 M7 1 L1 7" stroke="#fafafa" stroke-width="1.3"/></svg><div style="position:absolute;left:39px;top:577px;width:1002px;height:98px;background:#ffffff;border-left:1px solid #7a7a7a;box-sizing:border-box"></div><div style="position:absolute;left:41px;top:577.3px;white-space:nowrap;font-family:'Liberation Mono', monospace;font-size:10px;line-height:11px;color:#000">Command: lbd</div><div style="position:absolute;left:41px;top:587.92px;white-space:nowrap;font-family:'Liberation Mono', monospace;font-size:10px;line-height:11px;color:#000">></div><div style="position:absolute;left:41px;top:598.54px;white-space:nowrap;font-family:'Liberation Mono', monospace;font-size:10px;line-height:11px;color:#000">Command:</div><div style="position:absolute;left:41px;top:609.16px;white-space:nowrap;font-family:'Liberation Mono', monospace;font-size:10px;line-height:11px;color:#000">Cancel</div><div style="position:absolute;left:41px;top:619.78px;white-space:nowrap;font-family:'Liberation Mono', monospace;font-size:10px;line-height:11px;color:#000">Command: _coordedit</div><div style="position:absolute;left:41px;top:630.4px;white-space:nowrap;font-family:'Liberation Mono', monospace;font-size:10px;line-height:11px;color:#000">Command: activeeditor_windowselect</div><div style="position:absolute;left:41px;top:641.02px;white-space:nowrap;font-family:'Liberation Mono', monospace;font-size:10px;line-height:11px;color:#000">Select points for Active Editor selection set.</div><div style="position:absolute;left:41px;top:651.64px;white-space:nowrap;font-family:'Liberation Mono', monospace;font-size:10px;line-height:11px;color:#000">FILter/&lt;Select entities&gt;:</div><div style="position:absolute;left:41px;top:662.26px;white-space:nowrap;font-family:'Liberation Mono', monospace;font-size:10px;line-height:11px;color:#000">Opposite corner:</div><div style="position:absolute;left:41px;top:672.88px;white-space:nowrap;font-family:'Liberation Mono', monospace;font-size:10px;line-height:11px;color:#000">Entities in set: 70</div><div style="position:absolute;left:1027px;top:577px;width:14px;height:98px;background:linear-gradient(90deg,#e8e8e8,#f4f4f4 50%,#e8e8e8);border-left:1px solid #e0e0e0;box-sizing:border-box"></div><svg style="position:absolute;left:1030px;top:582px" width="7" height="5"><path d="M0.5 4.5 L3.5 0.8 L6.5 4.5Z" fill="#404040"/></svg><div style="position:absolute;left:948.4px;top:20.4px;width:95.8px;height:154px;background:linear-gradient(#bcd4e4,#a8c4d8);border:1px solid #4a5a66;border-radius:5px 5px 0 0;box-sizing:border-box;box-shadow:0 0 3px rgba(0,0,0,0.4)"></div><div style="position:absolute;left:952px;top:25px;width:88px;height:12px;background:linear-gradient(90deg,#60686a,#50585a 50%,#2e3436 80%,#3a4042)"></div><div style="position:absolute;left:954px;top:26px;width:54px;height:10px;background:#6a7274;border-radius:4px;box-shadow:0 0 3px 2px #6a7274"></div><div style="position:absolute;left:954.7px;top:24.4px;white-space:nowrap;font-family:'Liberation Sans', sans-serif;font-size:9.3px;color:#1c2a30;line-height:12px">Hot Toggles!</div><div style="position:absolute;left:1027.6px;top:24.7px;width:11.7px;height:11.7px;background:linear-gradient(#5a6266,#30383c);border:1px solid #d0dae0;box-sizing:border-box;border-radius:1px"></div><svg style="position:absolute;left:1029.5px;top:26.5px" width="8" height="8"><path d="M1.5 1.5 L6.5 6.5 M6.5 1.5 L1.5 6.5" stroke="#fff" stroke-width="1.6"/></svg><div style="position:absolute;left:952.3px;top:37.9px;width:88px;height:133px;background:#f0f0f0;border:1px solid #3c4850;box-sizing:border-box"></div><div style="position:absolute;left:1016.5px;top:42px;white-space:nowrap;font-family:'Liberation Sans', sans-serif;font-size:9.3px;color:#303030;line-height:12px">on</div><div style="position:absolute;left:1016.3px;top:53px;white-space:nowrap;font-family:'Liberation Sans', sans-serif;font-size:9.3px;color:#303030;line-height:12px">ut</div><div style="position:absolute;left:1011.2px;top:86px;white-space:nowrap;font-family:'Liberation Sans', sans-serif;font-size:9.3px;color:#303030;line-height:12px">arves</div><div style="position:absolute;left:1014.85px;top:97px;white-space:nowrap;font-family:'Liberation Sans', sans-serif;font-size:9.3px;color:#303030;line-height:12px">es</div><div style="position:absolute;left:1015.35px;top:108px;white-space:nowrap;font-family:'Liberation Sans', sans-serif;font-size:9.3px;color:#303030;line-height:12px">s</div><div style="position:absolute;left:1010px;top:121px;width:28px;height:15px;background:#fff;border:1px solid #d8d8d8;box-sizing:border-box"></div><div style="position:absolute;left:1010px;top:138px;width:28px;height:13px;background:#f4f4f4;border:1px solid #e0e0e0;box-sizing:border-box"></div><div style="position:absolute;left:1010px;top:155.5px;width:14px;height:10px;background:linear-gradient(#f4f4f4,#dcdcdc);border:1px solid #a8a8a8;box-sizing:border-box;border-radius:2px"></div><div style="position:absolute;left:615px;top:44px;width:402px;height:630px;background:linear-gradient(90deg,#8fc0e0,#b0dcf6 1.2%,#a8d4f0 98.8%,#90c0e0);border:1px solid #3e4e5a;border-radius:6px 6px 0 0;box-sizing:border-box;box-shadow:0 0 9px 1px rgba(0,0,0,0.42)"></div><div style="position:absolute;left:616px;top:45px;width:332px;height:20px;background:linear-gradient(#3a3e40,#2a2e30 40%,#1c2022);border-radius:5px 0 0 0"></div><div style="position:absolute;left:948px;top:45px;width:68px;height:20px;background:linear-gradient(90deg,#1c2022,#8fa8b8 4px,#a8c4d6 30%,#b4d2e6);border-radius:0 5px 0 0"></div><div style="position:absolute;left:616px;top:45px;width:400px;height:2px;background:linear-gradient(90deg,#b0b4b4,#8a8e90 60%,#c0d4e2);border-radius:5px 5px 0 0"></div><div style="position:absolute;left:626px;top:48.5px;width:256px;height:13px;background:#929696;border-radius:6px;box-shadow:0 0 5px 3px #929696"></div><div style="position:absolute;left:616px;top:65px;width:4px;height:479px;background:linear-gradient(90deg,#2a3238,#3a4a56 50%,#1a2228)"></div><div style="position:absolute;left:1012px;top:175px;width:4.5px;height:369px;background:linear-gradient(#a8c8dc,#4a5a66 15px,#1e262c 40px,#1a2026)"></div><div style="position:absolute;left:621.5px;top:49px;width:9px;height:10.5px;background:#000"></div><svg style="position:absolute;left:621.5px;top:49px" width="9" height="11" viewBox="0 0 9 11"><path d="M4.5 0.5 L7 4 L5.5 5 L4.5 10.5 L3.5 5 L2 4 Z" fill="#f0e020"/></svg><div style="position:absolute;left:636px;top:48.6px;white-space:nowrap;font-family:'Liberation Sans', sans-serif;font-size:9.6px;color:#22272a;line-height:13px;transform:scaleX(0.948);transform-origin:0 0">Active Drawing Technology &#8482; &nbsp;- [Coordinate Editor : Sample]</div><div style="position:absolute;left:934.2px;top:44px;width:21.2px;height:13.5px;background:linear-gradient(#9aa4ae,#7a8692 45%,#56626c 50%,#6a7884);border:1px solid #2a3238;border-top:none;border-radius:0 0 0 4px;box-sizing:border-box"></div><div style="position:absolute;left:940.5px;top:51px;width:9px;height:3px;background:#fff;box-shadow:0 0 1px #222"></div><div style="position:absolute;left:955.4px;top:44px;width:20.9px;height:13.5px;background:linear-gradient(#c4d2dc,#a4b6c4 45%,#8aa0b0 50%,#9cb2c2);border:1px solid #2a3238;border-top:none;border-left:none;box-sizing:border-box"></div><div style="position:absolute;left:961px;top:47.5px;width:9px;height:6.5px;background:transparent;border:1.5px solid #fff;box-sizing:border-box;box-shadow:0 0 1px #333,inset 0 0 1px #333"></div><div style="position:absolute;left:976.3px;top:44px;width:35.5px;height:13.5px;background:linear-gradient(#eaa498,#d8634e 45%,#c8301c 50%,#d85a3a);border:1px solid #4a1810;border-top:none;border-left:none;border-radius:0 0 4px 0;box-sizing:border-box"></div><svg style="position:absolute;left:988px;top:45.5px" width="11" height="10"><path d="M2 1.5 L9 8.5 M9 1.5 L2 8.5" stroke="#333" stroke-width="3"/><path d="M2 1.5 L9 8.5 M9 1.5 L2 8.5" stroke="#fff" stroke-width="2"/></svg><div style="position:absolute;left:619px;top:64.5px;width:392.5px;height:609.5px;background:#f0f0f0;border:1px solid #4a545c;box-sizing:border-box"></div><div style="position:absolute;left:620px;top:65.5px;width:390.5px;height:15.5px;background:linear-gradient(#f8fafd,#e8eef8 50%,#dae3f1);border-bottom:1px solid #b8c4d4;box-sizing:border-box"></div><div style="position:absolute;left:625.2px;top:67.6px;white-space:nowrap;font-family:'Liberation Sans', sans-serif;font-size:10px;color:#1a1a1a;line-height:12px;transform:scaleX(0.92);transform-origin:0 0">File</div><div style="position:absolute;left:649.6px;top:67.6px;white-space:nowrap;font-family:'Liberation Sans', sans-serif;font-size:10px;color:#1a1a1a;line-height:12px;transform:scaleX(0.92);transform-origin:0 0">Select</div><div style="position:absolute;left:683.7px;top:67.6px;white-space:nowrap;font-family:'Liberation Sans', sans-serif;font-size:10px;color:#1a1a1a;line-height:12px;transform:scaleX(0.92);transform-origin:0 0">Edit</div><div style="position:absolute;left:708.9px;top:67.6px;white-space:nowrap;font-family:'Liberation Sans', sans-serif;font-size:10px;color:#1a1a1a;line-height:12px;transform:scaleX(0.92);transform-origin:0 0">Sort</div><div style="position:absolute;left:736px;top:67.6px;white-space:nowrap;font-family:'Liberation Sans', sans-serif;font-size:10px;color:#1a1a1a;line-height:12px;transform:scaleX(0.92);transform-origin:0 0">Tools</div><div style="position:absolute;left:768px;top:67.6px;white-space:nowrap;font-family:'Liberation Sans', sans-serif;font-size:10px;color:#1a1a1a;line-height:12px;transform:scaleX(0.92);transform-origin:0 0">Window</div><div style="position:absolute;left:812.2px;top:67.6px;white-space:nowrap;font-family:'Liberation Sans', sans-serif;font-size:10px;color:#1a1a1a;line-height:12px;transform:scaleX(0.92);transform-origin:0 0">Format</div><div style="position:absolute;left:851.5px;top:67.6px;white-space:nowrap;font-family:'Liberation Sans', sans-serif;font-size:10px;color:#1a1a1a;line-height:12px;transform:scaleX(0.92);transform-origin:0 0">Help</div><div style="position:absolute;left:620px;top:81px;width:376.5px;height:577px;background:#fff;overflow:hidden"></div><div style="position:absolute;left:620px;top:81px;width:376.5px;height:15.200000000000003px;background:linear-gradient(#f6f6f6,#ececec);border-top:1px solid #6a6a6a;border-bottom:1.5px solid #404040;box-sizing:border-box"></div><div style="position:absolute;left:637px;top:81px;width:1.2px;height:15.200000000000003px;background:#505050"></div><div style="position:absolute;left:667px;top:81px;width:1.2px;height:15.200000000000003px;background:#505050"></div><div style="position:absolute;left:638px;top:84.2px;width:30px;text-align:center;font-family:'Liberation Sans', sans-serif;font-size:8.4px;font-weight:bold;color:#111;line-height:10px">Point</div><div style="position:absolute;left:727.3px;top:81px;width:1.2px;height:15.200000000000003px;background:#505050"></div><div style="position:absolute;left:668px;top:84.2px;width:60.299999999999955px;text-align:center;font-family:'Liberation Sans', sans-serif;font-size:8.4px;font-weight:bold;color:#111;line-height:10px">Northing</div><div style="position:absolute;left:787.4px;top:81px;width:1.2px;height:15.200000000000003px;background:#505050"></div><div style="position:absolute;left:728.3px;top:84.2px;width:60.10000000000002px;text-align:center;font-family:'Liberation Sans', sans-serif;font-size:8.4px;font-weight:bold;color:#111;line-height:10px">Easting</div><div style="position:absolute;left:848.6px;top:81px;width:1.2px;height:15.200000000000003px;background:#505050"></div><div style="position:absolute;left:788.4px;top:84.2px;width:61.200000000000045px;text-align:center;font-family:'Liberation Sans', sans-serif;font-size:8.4px;font-weight:bold;color:#111;line-height:10px">Elevation</div><div style="position:absolute;left:923.5px;top:81px;width:1.2px;height:15.200000000000003px;background:#505050"></div><div style="position:absolute;left:849.6px;top:84.2px;width:74.89999999999998px;text-align:center;font-family:'Liberation Sans', sans-serif;font-size:8.4px;font-weight:bold;color:#111;line-height:10px">Description</div><div style="position:absolute;left:995.5px;top:81px;width:1.2px;height:15.200000000000003px;background:#505050"></div><div style="position:absolute;left:924.5px;top:84.2px;width:72.0px;text-align:center;font-family:'Liberation Sans', sans-serif;font-size:8.4px;font-weight:bold;color:#111;line-height:10px">Note</div><div style="position:absolute;left:0;top:0;width:1080px;height:658px;overflow:hidden"><div style="position:absolute;left:620px;top:96.2px;width:18px;height:12.085px;background:#f0f0f0;border-bottom:1px solid #505050;border-right:1px solid #505050;box-sizing:border-box"></div><div style="position:absolute;left:620px;top:108.285px;width:18px;height:12.085px;background:#f0f0f0;border-bottom:1px solid #505050;border-right:1px solid #505050;box-sizing:border-box"></div><div style="position:absolute;left:638px;top:108.285px;width:358.5px;height:12.085px;background:#00a4fc"></div><div style="position:absolute;left:620px;top:120.37px;width:18px;height:12.085px;background:#f0f0f0;border-bottom:1px solid #505050;border-right:1px solid #505050;box-sizing:border-box"></div><div style="position:absolute;left:620px;top:132.455px;width:18px;height:12.085px;background:#f0f0f0;border-bottom:1px solid #505050;border-right:1px solid #505050;box-sizing:border-box"></div><div style="position:absolute;left:638px;top:132.455px;width:358.5px;height:12.085px;background:#00a4fc"></div><div style="position:absolute;left:620px;top:144.54000000000002px;width:18px;height:12.085px;background:#f0f0f0;border-bottom:1px solid #505050;border-right:1px solid #505050;box-sizing:border-box"></div><div style="position:absolute;left:638px;top:144.54000000000002px;width:358.5px;height:12.085px;background:#00a4fc"></div><div style="position:absolute;left:620px;top:156.625px;width:18px;height:12.085px;background:#f0f0f0;border-bottom:1px solid #505050;border-right:1px solid #505050;box-sizing:border-box"></div><div style="position:absolute;left:638px;top:156.625px;width:358.5px;height:12.085px;background:#00a4fc"></div><div style="position:absolute;left:620px;top:168.71px;width:18px;height:12.085px;background:#f0f0f0;border-bottom:1px solid #505050;border-right:1px solid #505050;box-sizing:border-box"></div><div style="position:absolute;left:620px;top:180.79500000000002px;width:18px;height:12.085px;background:#f0f0f0;border-bottom:1px solid #505050;border-right:1px solid #505050;box-sizing:border-box"></div><div style="position:absolute;left:638px;top:180.79500000000002px;width:358.5px;height:12.085px;background:#00a4fc"></div><div style="position:absolute;left:620px;top:192.88px;width:18px;height:12.085px;background:#f0f0f0;border-bottom:1px solid #505050;border-right:1px solid #505050;box-sizing:border-box"></div><div style="position:absolute;left:620px;top:204.96500000000003px;width:18px;height:12.085px;background:#f0f0f0;border-bottom:1px solid #505050;border-right:1px solid #505050;box-sizing:border-box"></div><div style="position:absolute;left:620px;top:217.05px;width:18px;height:12.085px;background:#f0f0f0;border-bottom:1px solid #505050;border-right:1px solid #505050;box-sizing:border-box"></div><div style="position:absolute;left:638px;top:217.05px;width:358.5px;height:12.085px;background:#00a4fc"></div><div style="position:absolute;left:620px;top:229.135px;width:18px;height:12.085px;background:#f0f0f0;border-bottom:1px solid #505050;border-right:1px solid #505050;box-sizing:border-box"></div><div style="position:absolute;left:620px;top:241.22000000000003px;width:18px;height:12.085px;background:#f0f0f0;border-bottom:1px solid #505050;border-right:1px solid #505050;box-sizing:border-box"></div><div style="position:absolute;left:620px;top:253.305px;width:18px;height:12.085px;background:#f0f0f0;border-bottom:1px solid #505050;border-right:1px solid #505050;box-sizing:border-box"></div><div style="position:absolute;left:620px;top:265.39px;width:18px;height:12.085px;background:#f0f0f0;border-bottom:1px solid #505050;border-right:1px solid #505050;box-sizing:border-box"></div><div style="position:absolute;left:620px;top:277.475px;width:18px;height:12.085px;background:#f0f0f0;border-bottom:1px solid #505050;border-right:1px solid #505050;box-sizing:border-box"></div><div style="position:absolute;left:620px;top:289.56px;width:18px;height:12.085px;background:#f0f0f0;border-bottom:1px solid #505050;border-right:1px solid #505050;box-sizing:border-box"></div><div style="position:absolute;left:620px;top:301.64500000000004px;width:18px;height:12.085px;background:#f0f0f0;border-bottom:1px solid #505050;border-right:1px solid #505050;box-sizing:border-box"></div><div style="position:absolute;left:620px;top:313.73px;width:18px;height:12.085px;background:#f0f0f0;border-bottom:1px solid #505050;border-right:1px solid #505050;box-sizing:border-box"></div><div style="position:absolute;left:620px;top:325.815px;width:18px;height:12.085px;background:#f0f0f0;border-bottom:1px solid #505050;border-right:1px solid #505050;box-sizing:border-box"></div><div style="position:absolute;left:620px;top:337.90000000000003px;width:18px;height:12.085px;background:#f0f0f0;border-bottom:1px solid #505050;border-right:1px solid #505050;box-sizing:border-box"></div><div style="position:absolute;left:620px;top:349.985px;width:18px;height:12.085px;background:#f0f0f0;border-bottom:1px solid #505050;border-right:1px solid #505050;box-sizing:border-box"></div><div style="position:absolute;left:620px;top:362.07px;width:18px;height:12.085px;background:#f0f0f0;border-bottom:1px solid #505050;border-right:1px solid #505050;box-sizing:border-box"></div><div style="position:absolute;left:620px;top:374.15500000000003px;width:18px;height:12.085px;background:#f0f0f0;border-bottom:1px solid #505050;border-right:1px solid #505050;box-sizing:border-box"></div><div style="position:absolute;left:620px;top:386.24px;width:18px;height:12.085px;background:#f0f0f0;border-bottom:1px solid #505050;border-right:1px solid #505050;box-sizing:border-box"></div><div style="position:absolute;left:620px;top:398.325px;width:18px;height:12.085px;background:#f0f0f0;border-bottom:1px solid #505050;border-right:1px solid #505050;box-sizing:border-box"></div><div style="position:absolute;left:620px;top:410.41px;width:18px;height:12.085px;background:#f0f0f0;border-bottom:1px solid #505050;border-right:1px solid #505050;box-sizing:border-box"></div><div style="position:absolute;left:620px;top:422.495px;width:18px;height:12.085px;background:#f0f0f0;border-bottom:1px solid #505050;border-right:1px solid #505050;box-sizing:border-box"></div><div style="position:absolute;left:620px;top:434.58px;width:18px;height:12.085px;background:#f0f0f0;border-bottom:1px solid #505050;border-right:1px solid #505050;box-sizing:border-box"></div><div style="position:absolute;left:620px;top:446.665px;width:18px;height:12.085px;background:#f0f0f0;border-bottom:1px solid #505050;border-right:1px solid #505050;box-sizing:border-box"></div><div style="position:absolute;left:620px;top:458.75px;width:18px;height:12.085px;background:#f0f0f0;border-bottom:1px solid #505050;border-right:1px solid #505050;box-sizing:border-box"></div><div style="position:absolute;left:620px;top:470.83500000000004px;width:18px;height:12.085px;background:#f0f0f0;border-bottom:1px solid #505050;border-right:1px solid #505050;box-sizing:border-box"></div><div style="position:absolute;left:620px;top:482.92px;width:18px;height:12.085px;background:#f0f0f0;border-bottom:1px solid #505050;border-right:1px solid #505050;box-sizing:border-box"></div><div style="position:absolute;left:620px;top:495.005px;width:18px;height:12.085px;background:#f0f0f0;border-bottom:1px solid #505050;border-right:1px solid #505050;box-sizing:border-box"></div><div style="position:absolute;left:620px;top:507.09000000000003px;width:18px;height:12.085px;background:#f0f0f0;border-bottom:1px solid #505050;border-right:1px solid #505050;box-sizing:border-box"></div><div style="position:absolute;left:620px;top:519.1750000000001px;width:18px;height:12.085px;background:#f0f0f0;border-bottom:1px solid #505050;border-right:1px solid #505050;box-sizing:border-box"></div><div style="position:absolute;left:620px;top:531.2600000000001px;width:18px;height:12.085px;background:#f0f0f0;border-bottom:1px solid #505050;border-right:1px solid #505050;box-sizing:border-box"></div><div style="position:absolute;left:620px;top:543.345px;width:18px;height:12.085px;background:#f0f0f0;border-bottom:1px solid #505050;border-right:1px solid #505050;box-sizing:border-box"></div><div style="position:absolute;left:620px;top:555.4300000000001px;width:18px;height:12.085px;background:#f0f0f0;border-bottom:1px solid #505050;border-right:1px solid #505050;box-sizing:border-box"></div><div style="position:absolute;left:620px;top:567.5150000000001px;width:18px;height:12.085px;background:#f0f0f0;border-bottom:1px solid #505050;border-right:1px solid #505050;box-sizing:border-box"></div><div style="position:absolute;left:620px;top:579.6px;width:18px;height:12.085px;background:#f0f0f0;border-bottom:1px solid #505050;border-right:1px solid #505050;box-sizing:border-box"></div><div style="position:absolute;left:620px;top:591.6850000000001px;width:18px;height:12.085px;background:#f0f0f0;border-bottom:1px solid #505050;border-right:1px solid #505050;box-sizing:border-box"></div><div style="position:absolute;left:620px;top:603.7700000000001px;width:18px;height:12.085px;background:#f0f0f0;border-bottom:1px solid #505050;border-right:1px solid #505050;box-sizing:border-box"></div><div style="position:absolute;left:620px;top:615.8550000000001px;width:18px;height:12.085px;background:#f0f0f0;border-bottom:1px solid #505050;border-right:1px solid #505050;box-sizing:border-box"></div><div style="position:absolute;left:620px;top:627.94px;width:18px;height:12.085px;background:#f0f0f0;border-bottom:1px solid #505050;border-right:1px solid #505050;box-sizing:border-box"></div><div style="position:absolute;left:638px;top:627.94px;width:358.5px;height:12.085px;background:#00a4fc"></div><div style="position:absolute;left:620px;top:640.0250000000001px;width:18px;height:12.085px;background:#f0f0f0;border-bottom:1px solid #505050;border-right:1px solid #505050;box-sizing:border-box"></div><div style="position:absolute;left:620px;top:652.1100000000001px;width:18px;height:5.889999999999873px;background:#f0f0f0;border-bottom:1px solid #505050;border-right:1px solid #505050;box-sizing:border-box"></div><div style="position:absolute;left:638px;top:107.685px;width:358.5px;height:1px;background:#9a9a9a"></div><div style="position:absolute;left:638px;top:119.77000000000001px;width:358.5px;height:1px;background:#9a9a9a"></div><div style="position:absolute;left:638px;top:131.85500000000002px;width:358.5px;height:1px;background:#9a9a9a"></div><div style="position:absolute;left:638px;top:143.94000000000003px;width:358.5px;height:1px;background:#9a9a9a"></div><div style="position:absolute;left:638px;top:156.02500000000003px;width:358.5px;height:1px;background:#9a9a9a"></div><div style="position:absolute;left:638px;top:168.11px;width:358.5px;height:1px;background:#9a9a9a"></div><div style="position:absolute;left:638px;top:180.19500000000002px;width:358.5px;height:1px;background:#9a9a9a"></div><div style="position:absolute;left:638px;top:192.28000000000003px;width:358.5px;height:1px;background:#9a9a9a"></div><div style="position:absolute;left:638px;top:204.365px;width:358.5px;height:1px;background:#9a9a9a"></div><div style="position:absolute;left:638px;top:216.45000000000005px;width:358.5px;height:1px;background:#9a9a9a"></div><div style="position:absolute;left:638px;top:228.53500000000003px;width:358.5px;height:1px;background:#9a9a9a"></div><div style="position:absolute;left:638px;top:240.62px;width:358.5px;height:1px;background:#9a9a9a"></div><div style="position:absolute;left:638px;top:252.70500000000004px;width:358.5px;height:1px;background:#9a9a9a"></div><div style="position:absolute;left:638px;top:264.78999999999996px;width:358.5px;height:1px;background:#9a9a9a"></div><div style="position:absolute;left:638px;top:276.87499999999994px;width:358.5px;height:1px;background:#9a9a9a"></div><div style="position:absolute;left:638px;top:288.96px;width:358.5px;height:1px;background:#9a9a9a"></div><div style="position:absolute;left:638px;top:301.04499999999996px;width:358.5px;height:1px;background:#9a9a9a"></div><div style="position:absolute;left:638px;top:313.13px;width:358.5px;height:1px;background:#9a9a9a"></div><div style="position:absolute;left:638px;top:325.215px;width:358.5px;height:1px;background:#9a9a9a"></div><div style="position:absolute;left:638px;top:337.29999999999995px;width:358.5px;height:1px;background:#9a9a9a"></div><div style="position:absolute;left:638px;top:349.385px;width:358.5px;height:1px;background:#9a9a9a"></div><div style="position:absolute;left:638px;top:361.46999999999997px;width:358.5px;height:1px;background:#9a9a9a"></div><div style="position:absolute;left:638px;top:373.55499999999995px;width:358.5px;height:1px;background:#9a9a9a"></div><div style="position:absolute;left:638px;top:385.64px;width:358.5px;height:1px;background:#9a9a9a"></div><div style="position:absolute;left:638px;top:397.72499999999997px;width:358.5px;height:1px;background:#9a9a9a"></div><div style="position:absolute;left:638px;top:409.80999999999995px;width:358.5px;height:1px;background:#9a9a9a"></div><div style="position:absolute;left:638px;top:421.895px;width:358.5px;height:1px;background:#9a9a9a"></div><div style="position:absolute;left:638px;top:433.97999999999996px;width:358.5px;height:1px;background:#9a9a9a"></div><div style="position:absolute;left:638px;top:446.06499999999994px;width:358.5px;height:1px;background:#9a9a9a"></div><div style="position:absolute;left:638px;top:458.15px;width:358.5px;height:1px;background:#9a9a9a"></div><div style="position:absolute;left:638px;top:470.23499999999996px;width:358.5px;height:1px;background:#9a9a9a"></div><div style="position:absolute;left:638px;top:482.32px;width:358.5px;height:1px;background:#9a9a9a"></div><div style="position:absolute;left:638px;top:494.405px;width:358.5px;height:1px;background:#9a9a9a"></div><div style="position:absolute;left:638px;top:506.48999999999995px;width:358.5px;height:1px;background:#9a9a9a"></div><div style="position:absolute;left:638px;top:518.575px;width:358.5px;height:1px;background:#9a9a9a"></div><div style="position:absolute;left:638px;top:530.6600000000001px;width:358.5px;height:1px;background:#9a9a9a"></div><div style="position:absolute;left:638px;top:542.7450000000001px;width:358.5px;height:1px;background:#9a9a9a"></div><div style="position:absolute;left:638px;top:554.83px;width:358.5px;height:1px;background:#9a9a9a"></div><div style="position:absolute;left:638px;top:566.9150000000001px;width:358.5px;height:1px;background:#9a9a9a"></div><div style="position:absolute;left:638px;top:579.0000000000001px;width:358.5px;height:1px;background:#9a9a9a"></div><div style="position:absolute;left:638px;top:591.085px;width:358.5px;height:1px;background:#9a9a9a"></div><div style="position:absolute;left:638px;top:603.1700000000001px;width:358.5px;height:1px;background:#9a9a9a"></div><div style="position:absolute;left:638px;top:615.2550000000001px;width:358.5px;height:1px;background:#9a9a9a"></div><div style="position:absolute;left:638px;top:627.3400000000001px;width:358.5px;height:1px;background:#9a9a9a"></div><div style="position:absolute;left:638px;top:639.4250000000001px;width:358.5px;height:1px;background:#9a9a9a"></div><div style="position:absolute;left:638px;top:651.5100000000001px;width:358.5px;height:1px;background:#9a9a9a"></div><div style="position:absolute;left:638px;top:663.5950000000001px;width:358.5px;height:1px;background:#9a9a9a"></div><div style="position:absolute;left:641px;top:97.10000000000001px;white-space:nowrap;font-family:'Liberation Sans', sans-serif;font-size:8.5px;color:#000;line-height:10px;letter-spacing:-0.22px">89</div><div style="position:absolute;left:668px;top:97.10000000000001px;width:55.299999999999955px;text-align:right;font-family:'Liberation Sans', sans-serif;font-size:8.5px;color:#000;line-height:10px;letter-spacing:-0.22px">10068.337</div><div style="position:absolute;left:728.3px;top:97.10000000000001px;width:55.60000000000002px;text-align:right;font-family:'Liberation Sans', sans-serif;font-size:8.5px;color:#000;line-height:10px;letter-spacing:-0.22px">4468.452</div><div style="position:absolute;left:788.4px;top:97.10000000000001px;width:56.200000000000045px;text-align:right;font-family:'Liberation Sans', sans-serif;font-size:8.5px;color:#000;line-height:10px;letter-spacing:-0.22px">0.000</div><div style="position:absolute;left:641px;top:109.185px;white-space:nowrap;font-family:'Liberation Sans', sans-serif;font-size:8.5px;color:#e8f6ff;line-height:10px;letter-spacing:-0.22px">90</div><div style="position:absolute;left:668px;top:109.185px;width:55.299999999999955px;text-align:right;font-family:'Liberation Sans', sans-serif;font-size:8.5px;color:#e8f6ff;line-height:10px;letter-spacing:-0.22px">10156.008</div><div style="position:absolute;left:728.3px;top:109.185px;width:55.60000000000002px;text-align:right;font-family:'Liberation Sans', sans-serif;font-size:8.5px;color:#e8f6ff;line-height:10px;letter-spacing:-0.22px">4496.243</div><div style="position:absolute;left:788.4px;top:109.185px;width:56.200000000000045px;text-align:right;font-family:'Liberation Sans', sans-serif;font-size:8.5px;color:#e8f6ff;line-height:10px;letter-spacing:-0.22px">0.000</div><div style="position:absolute;left:641px;top:121.27000000000001px;white-space:nowrap;font-family:'Liberation Sans', sans-serif;font-size:8.5px;color:#000;line-height:10px;letter-spacing:-0.22px">91</div><div style="position:absolute;left:668px;top:121.27000000000001px;width:55.299999999999955px;text-align:right;font-family:'Liberation Sans', sans-serif;font-size:8.5px;color:#000;line-height:10px;letter-spacing:-0.22px">10305.464</div><div style="position:absolute;left:728.3px;top:121.27000000000001px;width:55.60000000000002px;text-align:right;font-family:'Liberation Sans', sans-serif;font-size:8.5px;color:#000;line-height:10px;letter-spacing:-0.22px">4424.182</div><div style="position:absolute;left:788.4px;top:121.27000000000001px;width:56.200000000000045px;text-align:right;font-family:'Liberation Sans', sans-serif;font-size:8.5px;color:#000;line-height:10px;letter-spacing:-0.22px">0.000</div><div style="position:absolute;left:641px;top:133.35500000000002px;white-space:nowrap;font-family:'Liberation Sans', sans-serif;font-size:8.5px;color:#e8f6ff;line-height:10px;letter-spacing:-0.22px">92</div><div style="position:absolute;left:668px;top:133.35500000000002px;width:55.299999999999955px;text-align:right;font-family:'Liberation Sans', sans-serif;font-size:8.5px;color:#e8f6ff;line-height:10px;letter-spacing:-0.22px">10279.750</div><div style="position:absolute;left:728.3px;top:133.35500000000002px;width:55.60000000000002px;text-align:right;font-family:'Liberation Sans', sans-serif;font-size:8.5px;color:#e8f6ff;line-height:10px;letter-spacing:-0.22px">4435.961</div><div style="position:absolute;left:788.4px;top:133.35500000000002px;width:56.200000000000045px;text-align:right;font-family:'Liberation Sans', sans-serif;font-size:8.5px;color:#e8f6ff;line-height:10px;letter-spacing:-0.22px">0.000</div><div style="position:absolute;left:641px;top:145.44000000000003px;white-space:nowrap;font-family:'Liberation Sans', sans-serif;font-size:8.5px;color:#e8f6ff;line-height:10px;letter-spacing:-0.22px">93</div><div style="position:absolute;left:668px;top:145.44000000000003px;width:55.299999999999955px;text-align:right;font-family:'Liberation Sans', sans-serif;font-size:8.5px;color:#e8f6ff;line-height:10px;letter-spacing:-0.22px">10275.132</div><div style="position:absolute;left:728.3px;top:145.44000000000003px;width:55.60000000000002px;text-align:right;font-family:'Liberation Sans', sans-serif;font-size:8.5px;color:#e8f6ff;line-height:10px;letter-spacing:-0.22px">4448.384</div><div style="position:absolute;left:788.4px;top:145.44000000000003px;width:56.200000000000045px;text-align:right;font-family:'Liberation Sans', sans-serif;font-size:8.5px;color:#e8f6ff;line-height:10px;letter-spacing:-0.22px">0.000</div><div style="position:absolute;left:641px;top:157.525px;white-space:nowrap;font-family:'Liberation Sans', sans-serif;font-size:8.5px;color:#e8f6ff;line-height:10px;letter-spacing:-0.22px">94</div><div style="position:absolute;left:668px;top:157.525px;width:55.299999999999955px;text-align:right;font-family:'Liberation Sans', sans-serif;font-size:8.5px;color:#e8f6ff;line-height:10px;letter-spacing:-0.22px">10276.374</div><div style="position:absolute;left:728.3px;top:157.525px;width:55.60000000000002px;text-align:right;font-family:'Liberation Sans', sans-serif;font-size:8.5px;color:#e8f6ff;line-height:10px;letter-spacing:-0.22px">4493.267</div><div style="position:absolute;left:788.4px;top:157.525px;width:56.200000000000045px;text-align:right;font-family:'Liberation Sans', sans-serif;font-size:8.5px;color:#e8f6ff;line-height:10px;letter-spacing:-0.22px">0.000</div><div style="position:absolute;left:641px;top:169.61px;white-space:nowrap;font-family:'Liberation Sans', sans-serif;font-size:8.5px;color:#000;line-height:10px;letter-spacing:-0.22px">95</div><div style="position:absolute;left:668px;top:169.61px;width:55.299999999999955px;text-align:right;font-family:'Liberation Sans', sans-serif;font-size:8.5px;color:#000;line-height:10px;letter-spacing:-0.22px">10331.374</div><div style="position:absolute;left:728.3px;top:169.61px;width:55.60000000000002px;text-align:right;font-family:'Liberation Sans', sans-serif;font-size:8.5px;color:#000;line-height:10px;letter-spacing:-0.22px">4469.287</div><div style="position:absolute;left:788.4px;top:169.61px;width:56.200000000000045px;text-align:right;font-family:'Liberation Sans', sans-serif;font-size:8.5px;color:#000;line-height:10px;letter-spacing:-0.22px">0.000</div><div style="position:absolute;left:852.1px;top:169.61px;white-space:nowrap;font-family:'Liberation Sans', sans-serif;font-size:8.5px;color:#000;line-height:10px;letter-spacing:-0.22px">RAD</div><div style="position:absolute;left:641px;top:181.69500000000002px;white-space:nowrap;font-family:'Liberation Sans', sans-serif;font-size:8.5px;color:#e8f6ff;line-height:10px;letter-spacing:-0.22px">96</div><div style="position:absolute;left:668px;top:181.69500000000002px;width:55.299999999999955px;text-align:right;font-family:'Liberation Sans', sans-serif;font-size:8.5px;color:#e8f6ff;line-height:10px;letter-spacing:-0.22px">10223.508</div><div style="position:absolute;left:728.3px;top:181.69500000000002px;width:55.60000000000002px;text-align:right;font-family:'Liberation Sans', sans-serif;font-size:8.5px;color:#e8f6ff;line-height:10px;letter-spacing:-0.22px">4415.058</div><div style="position:absolute;left:788.4px;top:181.69500000000002px;width:56.200000000000045px;text-align:right;font-family:'Liberation Sans', sans-serif;font-size:8.5px;color:#e8f6ff;line-height:10px;letter-spacing:-0.22px">0.000</div><div style="position:absolute;left:641px;top:193.78px;white-space:nowrap;font-family:'Liberation Sans', sans-serif;font-size:8.5px;color:#000;line-height:10px;letter-spacing:-0.22px">97</div><div style="position:absolute;left:668px;top:193.78px;width:55.299999999999955px;text-align:right;font-family:'Liberation Sans', sans-serif;font-size:8.5px;color:#000;line-height:10px;letter-spacing:-0.22px">10681.353</div><div style="position:absolute;left:728.3px;top:193.78px;width:55.60000000000002px;text-align:right;font-family:'Liberation Sans', sans-serif;font-size:8.5px;color:#000;line-height:10px;letter-spacing:-0.22px">4419.055</div><div style="position:absolute;left:788.4px;top:193.78px;width:56.200000000000045px;text-align:right;font-family:'Liberation Sans', sans-serif;font-size:8.5px;color:#000;line-height:10px;letter-spacing:-0.22px">0.000</div><div style="position:absolute;left:641px;top:205.86500000000004px;white-space:nowrap;font-family:'Liberation Sans', sans-serif;font-size:8.5px;color:#000;line-height:10px;letter-spacing:-0.22px">98</div><div style="position:absolute;left:668px;top:205.86500000000004px;width:55.299999999999955px;text-align:right;font-family:'Liberation Sans', sans-serif;font-size:8.5px;color:#000;line-height:10px;letter-spacing:-0.22px">10581.357</div><div style="position:absolute;left:728.3px;top:205.86500000000004px;width:55.60000000000002px;text-align:right;font-family:'Liberation Sans', sans-serif;font-size:8.5px;color:#000;line-height:10px;letter-spacing:-0.22px">4419.046</div><div style="position:absolute;left:788.4px;top:205.86500000000004px;width:56.200000000000045px;text-align:right;font-family:'Liberation Sans', sans-serif;font-size:8.5px;color:#000;line-height:10px;letter-spacing:-0.22px">0.000</div><div style="position:absolute;left:641px;top:217.95000000000002px;white-space:nowrap;font-family:'Liberation Sans', sans-serif;font-size:8.5px;color:#e8f6ff;line-height:10px;letter-spacing:-0.22px">99</div><div style="position:absolute;left:668px;top:217.95000000000002px;width:55.299999999999955px;text-align:right;font-family:'Liberation Sans', sans-serif;font-size:8.5px;color:#e8f6ff;line-height:10px;letter-spacing:-0.22px">10218.891</div><div style="position:absolute;left:728.3px;top:217.95000000000002px;width:55.60000000000002px;text-align:right;font-family:'Liberation Sans', sans-serif;font-size:8.5px;color:#e8f6ff;line-height:10px;letter-spacing:-0.22px">4427.481</div><div style="position:absolute;left:788.4px;top:217.95000000000002px;width:56.200000000000045px;text-align:right;font-family:'Liberation Sans', sans-serif;font-size:8.5px;color:#e8f6ff;line-height:10px;letter-spacing:-0.22px">0.000</div><div style="position:absolute;left:641px;top:230.035px;white-space:nowrap;font-family:'Liberation Sans', sans-serif;font-size:8.5px;color:#000;line-height:10px;letter-spacing:-0.22px">100</div><div style="position:absolute;left:668px;top:230.035px;width:55.299999999999955px;text-align:right;font-family:'Liberation Sans', sans-serif;font-size:8.5px;color:#000;line-height:10px;letter-spacing:-0.22px">10162.650</div><div style="position:absolute;left:728.3px;top:230.035px;width:55.60000000000002px;text-align:right;font-family:'Liberation Sans', sans-serif;font-size:8.5px;color:#000;line-height:10px;letter-spacing:-0.22px">4406.578</div><div style="position:absolute;left:788.4px;top:230.035px;width:56.200000000000045px;text-align:right;font-family:'Liberation Sans', sans-serif;font-size:8.5px;color:#000;line-height:10px;letter-spacing:-0.22px">0.000</div><div style="position:absolute;left:852.1px;top:230.035px;white-space:nowrap;font-family:'Liberation Sans', sans-serif;font-size:8.5px;color:#000;line-height:10px;letter-spacing:-0.22px">RAD</div><div style="position:absolute;left:641px;top:242.12000000000003px;white-space:nowrap;font-family:'Liberation Sans', sans-serif;font-size:8.5px;color:#000;line-height:10px;letter-spacing:-0.22px">101</div><div style="position:absolute;left:668px;top:242.12000000000003px;width:55.299999999999955px;text-align:right;font-family:'Liberation Sans', sans-serif;font-size:8.5px;color:#000;line-height:10px;letter-spacing:-0.22px">10405.756</div><div style="position:absolute;left:728.3px;top:242.12000000000003px;width:55.60000000000002px;text-align:right;font-family:'Liberation Sans', sans-serif;font-size:8.5px;color:#000;line-height:10px;letter-spacing:-0.22px">4224.654</div><div style="position:absolute;left:788.4px;top:242.12000000000003px;width:56.200000000000045px;text-align:right;font-family:'Liberation Sans', sans-serif;font-size:8.5px;color:#000;line-height:10px;letter-spacing:-0.22px">0.000</div><div style="position:absolute;left:641px;top:254.205px;white-space:nowrap;font-family:'Liberation Sans', sans-serif;font-size:8.5px;color:#000;line-height:10px;letter-spacing:-0.22px">102</div><div style="position:absolute;left:668px;top:254.205px;width:55.299999999999955px;text-align:right;font-family:'Liberation Sans', sans-serif;font-size:8.5px;color:#000;line-height:10px;letter-spacing:-0.22px">10312.020</div><div style="position:absolute;left:728.3px;top:254.205px;width:55.60000000000002px;text-align:right;font-family:'Liberation Sans', sans-serif;font-size:8.5px;color:#000;line-height:10px;letter-spacing:-0.22px">4189.816</div><div style="position:absolute;left:788.4px;top:254.205px;width:56.200000000000045px;text-align:right;font-family:'Liberation Sans', sans-serif;font-size:8.5px;color:#000;line-height:10px;letter-spacing:-0.22px">0.000</div><div style="position:absolute;left:641px;top:266.28999999999996px;white-space:nowrap;font-family:'Liberation Sans', sans-serif;font-size:8.5px;color:#000;line-height:10px;letter-spacing:-0.22px">103</div><div style="position:absolute;left:668px;top:266.28999999999996px;width:55.299999999999955px;text-align:right;font-family:'Liberation Sans', sans-serif;font-size:8.5px;color:#000;line-height:10px;letter-spacing:-0.22px">10443.621</div><div style="position:absolute;left:728.3px;top:266.28999999999996px;width:55.60000000000002px;text-align:right;font-family:'Liberation Sans', sans-serif;font-size:8.5px;color:#000;line-height:10px;letter-spacing:-0.22px">4411.520</div><div style="position:absolute;left:788.4px;top:266.28999999999996px;width:56.200000000000045px;text-align:right;font-family:'Liberation Sans', sans-serif;font-size:8.5px;color:#000;line-height:10px;letter-spacing:-0.22px">0.000</div><div style="position:absolute;left:641px;top:278.375px;white-space:nowrap;font-family:'Liberation Sans', sans-serif;font-size:8.5px;color:#000;line-height:10px;letter-spacing:-0.22px">104</div><div style="position:absolute;left:668px;top:278.375px;width:55.299999999999955px;text-align:right;font-family:'Liberation Sans', sans-serif;font-size:8.5px;color:#000;line-height:10px;letter-spacing:-0.22px">10349.329</div><div style="position:absolute;left:728.3px;top:278.375px;width:55.60000000000002px;text-align:right;font-family:'Liberation Sans', sans-serif;font-size:8.5px;color:#000;line-height:10px;letter-spacing:-0.22px">4376.475</div><div style="position:absolute;left:788.4px;top:278.375px;width:56.200000000000045px;text-align:right;font-family:'Liberation Sans', sans-serif;font-size:8.5px;color:#000;line-height:10px;letter-spacing:-0.22px">0.000</div><div style="position:absolute;left:641px;top:290.46px;white-space:nowrap;font-family:'Liberation Sans', sans-serif;font-size:8.5px;color:#000;line-height:10px;letter-spacing:-0.22px">105</div><div style="position:absolute;left:668px;top:290.46px;width:55.299999999999955px;text-align:right;font-family:'Liberation Sans', sans-serif;font-size:8.5px;color:#000;line-height:10px;letter-spacing:-0.22px">10535.046</div><div style="position:absolute;left:728.3px;top:290.46px;width:55.60000000000002px;text-align:right;font-family:'Liberation Sans', sans-serif;font-size:8.5px;color:#000;line-height:10px;letter-spacing:-0.22px">4499.042</div><div style="position:absolute;left:788.4px;top:290.46px;width:56.200000000000045px;text-align:right;font-family:'Liberation Sans', sans-serif;font-size:8.5px;color:#000;line-height:10px;letter-spacing:-0.22px">0.000</div><div style="position:absolute;left:641px;top:302.545px;white-space:nowrap;font-family:'Liberation Sans', sans-serif;font-size:8.5px;color:#000;line-height:10px;letter-spacing:-0.22px">106</div><div style="position:absolute;left:668px;top:302.545px;width:55.299999999999955px;text-align:right;font-family:'Liberation Sans', sans-serif;font-size:8.5px;color:#000;line-height:10px;letter-spacing:-0.22px">10515.048</div><div style="position:absolute;left:728.3px;top:302.545px;width:55.60000000000002px;text-align:right;font-family:'Liberation Sans', sans-serif;font-size:8.5px;color:#000;line-height:10px;letter-spacing:-0.22px">4479.040</div><div style="position:absolute;left:788.4px;top:302.545px;width:56.200000000000045px;text-align:right;font-family:'Liberation Sans', sans-serif;font-size:8.5px;color:#000;line-height:10px;letter-spacing:-0.22px">0.000</div><div style="position:absolute;left:641px;top:314.63px;white-space:nowrap;font-family:'Liberation Sans', sans-serif;font-size:8.5px;color:#000;line-height:10px;letter-spacing:-0.22px">107</div><div style="position:absolute;left:668px;top:314.63px;width:55.299999999999955px;text-align:right;font-family:'Liberation Sans', sans-serif;font-size:8.5px;color:#000;line-height:10px;letter-spacing:-0.22px">10485.408</div><div style="position:absolute;left:728.3px;top:314.63px;width:55.60000000000002px;text-align:right;font-family:'Liberation Sans', sans-serif;font-size:8.5px;color:#000;line-height:10px;letter-spacing:-0.22px">4479.037</div><div style="position:absolute;left:788.4px;top:314.63px;width:56.200000000000045px;text-align:right;font-family:'Liberation Sans', sans-serif;font-size:8.5px;color:#000;line-height:10px;letter-spacing:-0.22px">0.000</div><div style="position:absolute;left:641px;top:326.715px;white-space:nowrap;font-family:'Liberation Sans', sans-serif;font-size:8.5px;color:#000;line-height:10px;letter-spacing:-0.22px">108</div><div style="position:absolute;left:668px;top:326.715px;width:55.299999999999955px;text-align:right;font-family:'Liberation Sans', sans-serif;font-size:8.5px;color:#000;line-height:10px;letter-spacing:-0.22px">10535.037</div><div style="position:absolute;left:728.3px;top:326.715px;width:55.60000000000002px;text-align:right;font-family:'Liberation Sans', sans-serif;font-size:8.5px;color:#000;line-height:10px;letter-spacing:-0.22px">4600.042</div><div style="position:absolute;left:788.4px;top:326.715px;width:56.200000000000045px;text-align:right;font-family:'Liberation Sans', sans-serif;font-size:8.5px;color:#000;line-height:10px;letter-spacing:-0.22px">0.000</div><div style="position:absolute;left:641px;top:338.8px;white-space:nowrap;font-family:'Liberation Sans', sans-serif;font-size:8.5px;color:#000;line-height:10px;letter-spacing:-0.22px">109</div><div style="position:absolute;left:668px;top:338.8px;width:55.299999999999955px;text-align:right;font-family:'Liberation Sans', sans-serif;font-size:8.5px;color:#000;line-height:10px;letter-spacing:-0.22px">10400.037</div><div style="position:absolute;left:728.3px;top:338.8px;width:55.60000000000002px;text-align:right;font-family:'Liberation Sans', sans-serif;font-size:8.5px;color:#000;line-height:10px;letter-spacing:-0.22px">4600.029</div><div style="position:absolute;left:788.4px;top:338.8px;width:56.200000000000045px;text-align:right;font-family:'Liberation Sans', sans-serif;font-size:8.5px;color:#000;line-height:10px;letter-spacing:-0.22px">0.000</div><div style="position:absolute;left:641px;top:350.885px;white-space:nowrap;font-family:'Liberation Sans', sans-serif;font-size:8.5px;color:#000;line-height:10px;letter-spacing:-0.22px">110</div><div style="position:absolute;left:668px;top:350.885px;width:55.299999999999955px;text-align:right;font-family:'Liberation Sans', sans-serif;font-size:8.5px;color:#000;line-height:10px;letter-spacing:-0.22px">10422.718</div><div style="position:absolute;left:728.3px;top:350.885px;width:55.60000000000002px;text-align:right;font-family:'Liberation Sans', sans-serif;font-size:8.5px;color:#000;line-height:10px;letter-spacing:-0.22px">4467.761</div><div style="position:absolute;left:788.4px;top:350.885px;width:56.200000000000045px;text-align:right;font-family:'Liberation Sans', sans-serif;font-size:8.5px;color:#000;line-height:10px;letter-spacing:-0.22px">0.000</div><div style="position:absolute;left:852.1px;top:350.885px;white-space:nowrap;font-family:'Liberation Sans', sans-serif;font-size:8.5px;color:#000;line-height:10px;letter-spacing:-0.22px">PIN</div><div style="position:absolute;left:641px;top:362.96999999999997px;white-space:nowrap;font-family:'Liberation Sans', sans-serif;font-size:8.5px;color:#000;line-height:10px;letter-spacing:-0.22px">111</div><div style="position:absolute;left:668px;top:362.96999999999997px;width:55.299999999999955px;text-align:right;font-family:'Liberation Sans', sans-serif;font-size:8.5px;color:#000;line-height:10px;letter-spacing:-0.22px">10161.858</div><div style="position:absolute;left:728.3px;top:362.96999999999997px;width:55.60000000000002px;text-align:right;font-family:'Liberation Sans', sans-serif;font-size:8.5px;color:#000;line-height:10px;letter-spacing:-0.22px">4306.798</div><div style="position:absolute;left:788.4px;top:362.96999999999997px;width:56.200000000000045px;text-align:right;font-family:'Liberation Sans', sans-serif;font-size:8.5px;color:#000;line-height:10px;letter-spacing:-0.22px">0.000</div><div style="position:absolute;left:641px;top:375.055px;white-space:nowrap;font-family:'Liberation Sans', sans-serif;font-size:8.5px;color:#000;line-height:10px;letter-spacing:-0.22px">112</div><div style="position:absolute;left:668px;top:375.055px;width:55.299999999999955px;text-align:right;font-family:'Liberation Sans', sans-serif;font-size:8.5px;color:#000;line-height:10px;letter-spacing:-0.22px">10255.594</div><div style="position:absolute;left:728.3px;top:375.055px;width:55.60000000000002px;text-align:right;font-family:'Liberation Sans', sans-serif;font-size:8.5px;color:#000;line-height:10px;letter-spacing:-0.22px">4341.637</div><div style="position:absolute;left:788.4px;top:375.055px;width:56.200000000000045px;text-align:right;font-family:'Liberation Sans', sans-serif;font-size:8.5px;color:#000;line-height:10px;letter-spacing:-0.22px">0.000</div><div style="position:absolute;left:641px;top:387.14px;white-space:nowrap;font-family:'Liberation Sans', sans-serif;font-size:8.5px;color:#000;line-height:10px;letter-spacing:-0.22px">113</div><div style="position:absolute;left:668px;top:387.14px;width:55.299999999999955px;text-align:right;font-family:'Liberation Sans', sans-serif;font-size:8.5px;color:#000;line-height:10px;letter-spacing:-0.22px">10067.955</div><div style="position:absolute;left:728.3px;top:387.14px;width:55.60000000000002px;text-align:right;font-family:'Liberation Sans', sans-serif;font-size:8.5px;color:#000;line-height:10px;letter-spacing:-0.22px">4271.929</div><div style="position:absolute;left:788.4px;top:387.14px;width:56.200000000000045px;text-align:right;font-family:'Liberation Sans', sans-serif;font-size:8.5px;color:#000;line-height:10px;letter-spacing:-0.22px">0.000</div><div style="position:absolute;left:641px;top:399.22499999999997px;white-space:nowrap;font-family:'Liberation Sans', sans-serif;font-size:8.5px;color:#000;line-height:10px;letter-spacing:-0.22px">114</div><div style="position:absolute;left:668px;top:399.22499999999997px;width:55.299999999999955px;text-align:right;font-family:'Liberation Sans', sans-serif;font-size:8.5px;color:#000;line-height:10px;letter-spacing:-0.22px">10111.570</div><div style="position:absolute;left:728.3px;top:399.22499999999997px;width:55.60000000000002px;text-align:right;font-family:'Liberation Sans', sans-serif;font-size:8.5px;color:#000;line-height:10px;letter-spacing:-0.22px">4352.118</div><div style="position:absolute;left:788.4px;top:399.22499999999997px;width:56.200000000000045px;text-align:right;font-family:'Liberation Sans', sans-serif;font-size:8.5px;color:#000;line-height:10px;letter-spacing:-0.22px">0.000</div><div style="position:absolute;left:641px;top:411.31px;white-space:nowrap;font-family:'Liberation Sans', sans-serif;font-size:8.5px;color:#000;line-height:10px;letter-spacing:-0.22px">115</div><div style="position:absolute;left:668px;top:411.31px;width:55.299999999999955px;text-align:right;font-family:'Liberation Sans', sans-serif;font-size:8.5px;color:#000;line-height:10px;letter-spacing:-0.22px">10211.729</div><div style="position:absolute;left:728.3px;top:411.31px;width:55.60000000000002px;text-align:right;font-family:'Liberation Sans', sans-serif;font-size:8.5px;color:#000;line-height:10px;letter-spacing:-0.22px">4389.344</div><div style="position:absolute;left:788.4px;top:411.31px;width:56.200000000000045px;text-align:right;font-family:'Liberation Sans', sans-serif;font-size:8.5px;color:#000;line-height:10px;letter-spacing:-0.22px">0.000</div><div style="position:absolute;left:641px;top:423.395px;white-space:nowrap;font-family:'Liberation Sans', sans-serif;font-size:8.5px;color:#000;line-height:10px;letter-spacing:-0.22px">116</div><div style="position:absolute;left:668px;top:423.395px;width:55.299999999999955px;text-align:right;font-family:'Liberation Sans', sans-serif;font-size:8.5px;color:#000;line-height:10px;letter-spacing:-0.22px">10070.754</div><div style="position:absolute;left:728.3px;top:423.395px;width:55.60000000000002px;text-align:right;font-family:'Liberation Sans', sans-serif;font-size:8.5px;color:#000;line-height:10px;letter-spacing:-0.22px">4272.949</div><div style="position:absolute;left:788.4px;top:423.395px;width:56.200000000000045px;text-align:right;font-family:'Liberation Sans', sans-serif;font-size:8.5px;color:#000;line-height:10px;letter-spacing:-0.22px">0.000</div><div style="position:absolute;left:641px;top:435.47999999999996px;white-space:nowrap;font-family:'Liberation Sans', sans-serif;font-size:8.5px;color:#000;line-height:10px;letter-spacing:-0.22px">117</div><div style="position:absolute;left:668px;top:435.47999999999996px;width:55.299999999999955px;text-align:right;font-family:'Liberation Sans', sans-serif;font-size:8.5px;color:#000;line-height:10px;letter-spacing:-0.22px">10161.855</div><div style="position:absolute;left:728.3px;top:435.47999999999996px;width:55.60000000000002px;text-align:right;font-family:'Liberation Sans', sans-serif;font-size:8.5px;color:#000;line-height:10px;letter-spacing:-0.22px">4306.808</div><div style="position:absolute;left:788.4px;top:435.47999999999996px;width:56.200000000000045px;text-align:right;font-family:'Liberation Sans', sans-serif;font-size:8.5px;color:#000;line-height:10px;letter-spacing:-0.22px">0.000</div><div style="position:absolute;left:641px;top:447.565px;white-space:nowrap;font-family:'Liberation Sans', sans-serif;font-size:8.5px;color:#000;line-height:10px;letter-spacing:-0.22px">118</div><div style="position:absolute;left:668px;top:447.565px;width:55.299999999999955px;text-align:right;font-family:'Liberation Sans', sans-serif;font-size:8.5px;color:#000;line-height:10px;letter-spacing:-0.22px">10255.590</div><div style="position:absolute;left:728.3px;top:447.565px;width:55.60000000000002px;text-align:right;font-family:'Liberation Sans', sans-serif;font-size:8.5px;color:#000;line-height:10px;letter-spacing:-0.22px">4341.646</div><div style="position:absolute;left:788.4px;top:447.565px;width:56.200000000000045px;text-align:right;font-family:'Liberation Sans', sans-serif;font-size:8.5px;color:#000;line-height:10px;letter-spacing:-0.22px">0.000</div><div style="position:absolute;left:641px;top:459.65px;white-space:nowrap;font-family:'Liberation Sans', sans-serif;font-size:8.5px;color:#000;line-height:10px;letter-spacing:-0.22px">119</div><div style="position:absolute;left:668px;top:459.65px;width:55.299999999999955px;text-align:right;font-family:'Liberation Sans', sans-serif;font-size:8.5px;color:#000;line-height:10px;letter-spacing:-0.22px">10349.325</div><div style="position:absolute;left:728.3px;top:459.65px;width:55.60000000000002px;text-align:right;font-family:'Liberation Sans', sans-serif;font-size:8.5px;color:#000;line-height:10px;letter-spacing:-0.22px">4376.485</div><div style="position:absolute;left:788.4px;top:459.65px;width:56.200000000000045px;text-align:right;font-family:'Liberation Sans', sans-serif;font-size:8.5px;color:#000;line-height:10px;letter-spacing:-0.22px">0.000</div><div style="position:absolute;left:641px;top:471.735px;white-space:nowrap;font-family:'Liberation Sans', sans-serif;font-size:8.5px;color:#000;line-height:10px;letter-spacing:-0.22px">120</div><div style="position:absolute;left:668px;top:471.735px;width:55.299999999999955px;text-align:right;font-family:'Liberation Sans', sans-serif;font-size:8.5px;color:#000;line-height:10px;letter-spacing:-0.22px">10443.617</div><div style="position:absolute;left:728.3px;top:471.735px;width:55.60000000000002px;text-align:right;font-family:'Liberation Sans', sans-serif;font-size:8.5px;color:#000;line-height:10px;letter-spacing:-0.22px">4411.529</div><div style="position:absolute;left:788.4px;top:471.735px;width:56.200000000000045px;text-align:right;font-family:'Liberation Sans', sans-serif;font-size:8.5px;color:#000;line-height:10px;letter-spacing:-0.22px">0.000</div><div style="position:absolute;left:641px;top:483.82px;white-space:nowrap;font-family:'Liberation Sans', sans-serif;font-size:8.5px;color:#000;line-height:10px;letter-spacing:-0.22px">121</div><div style="position:absolute;left:668px;top:483.82px;width:55.299999999999955px;text-align:right;font-family:'Liberation Sans', sans-serif;font-size:8.5px;color:#000;line-height:10px;letter-spacing:-0.22px">10481.361</div><div style="position:absolute;left:728.3px;top:483.82px;width:55.60000000000002px;text-align:right;font-family:'Liberation Sans', sans-serif;font-size:8.5px;color:#000;line-height:10px;letter-spacing:-0.22px">4418.968</div><div style="position:absolute;left:788.4px;top:483.82px;width:56.200000000000045px;text-align:right;font-family:'Liberation Sans', sans-serif;font-size:8.5px;color:#000;line-height:10px;letter-spacing:-0.22px">0.000</div><div style="position:absolute;left:641px;top:495.905px;white-space:nowrap;font-family:'Liberation Sans', sans-serif;font-size:8.5px;color:#000;line-height:10px;letter-spacing:-0.22px">122</div><div style="position:absolute;left:668px;top:495.905px;width:55.299999999999955px;text-align:right;font-family:'Liberation Sans', sans-serif;font-size:8.5px;color:#000;line-height:10px;letter-spacing:-0.22px">10805.054</div><div style="position:absolute;left:728.3px;top:495.905px;width:55.60000000000002px;text-align:right;font-family:'Liberation Sans', sans-serif;font-size:8.5px;color:#000;line-height:10px;letter-spacing:-0.22px">4419.067</div><div style="position:absolute;left:788.4px;top:495.905px;width:56.200000000000045px;text-align:right;font-family:'Liberation Sans', sans-serif;font-size:8.5px;color:#000;line-height:10px;letter-spacing:-0.22px">0.000</div><div style="position:absolute;left:641px;top:507.99px;white-space:nowrap;font-family:'Liberation Sans', sans-serif;font-size:8.5px;color:#000;line-height:10px;letter-spacing:-0.22px">123</div><div style="position:absolute;left:668px;top:507.99px;width:55.299999999999955px;text-align:right;font-family:'Liberation Sans', sans-serif;font-size:8.5px;color:#000;line-height:10px;letter-spacing:-0.22px">10915.043</div><div style="position:absolute;left:728.3px;top:507.99px;width:55.60000000000002px;text-align:right;font-family:'Liberation Sans', sans-serif;font-size:8.5px;color:#000;line-height:10px;letter-spacing:-0.22px">4529.077</div><div style="position:absolute;left:788.4px;top:507.99px;width:56.200000000000045px;text-align:right;font-family:'Liberation Sans', sans-serif;font-size:8.5px;color:#000;line-height:10px;letter-spacing:-0.22px">0.000</div><div style="position:absolute;left:641px;top:520.075px;white-space:nowrap;font-family:'Liberation Sans', sans-serif;font-size:8.5px;color:#000;line-height:10px;letter-spacing:-0.22px">124</div><div style="position:absolute;left:668px;top:520.075px;width:55.299999999999955px;text-align:right;font-family:'Liberation Sans', sans-serif;font-size:8.5px;color:#000;line-height:10px;letter-spacing:-0.22px">10581.375</div><div style="position:absolute;left:728.3px;top:520.075px;width:55.60000000000002px;text-align:right;font-family:'Liberation Sans', sans-serif;font-size:8.5px;color:#000;line-height:10px;letter-spacing:-0.22px">4229.208</div><div style="position:absolute;left:788.4px;top:520.075px;width:56.200000000000045px;text-align:right;font-family:'Liberation Sans', sans-serif;font-size:8.5px;color:#000;line-height:10px;letter-spacing:-0.22px">0.000</div><div style="position:absolute;left:641px;top:532.1600000000001px;white-space:nowrap;font-family:'Liberation Sans', sans-serif;font-size:8.5px;color:#000;line-height:10px;letter-spacing:-0.22px">125</div><div style="position:absolute;left:668px;top:532.1600000000001px;width:55.299999999999955px;text-align:right;font-family:'Liberation Sans', sans-serif;font-size:8.5px;color:#000;line-height:10px;letter-spacing:-0.22px">10681.370</div><div style="position:absolute;left:728.3px;top:532.1600000000001px;width:55.60000000000002px;text-align:right;font-family:'Liberation Sans', sans-serif;font-size:8.5px;color:#000;line-height:10px;letter-spacing:-0.22px">4230.894</div><div style="position:absolute;left:788.4px;top:532.1600000000001px;width:56.200000000000045px;text-align:right;font-family:'Liberation Sans', sans-serif;font-size:8.5px;color:#000;line-height:10px;letter-spacing:-0.22px">0.000</div><div style="position:absolute;left:641px;top:544.245px;white-space:nowrap;font-family:'Liberation Sans', sans-serif;font-size:8.5px;color:#000;line-height:10px;letter-spacing:-0.22px">126</div><div style="position:absolute;left:668px;top:544.245px;width:55.299999999999955px;text-align:right;font-family:'Liberation Sans', sans-serif;font-size:8.5px;color:#000;line-height:10px;letter-spacing:-0.22px">10781.366</div><div style="position:absolute;left:728.3px;top:544.245px;width:55.60000000000002px;text-align:right;font-family:'Liberation Sans', sans-serif;font-size:8.5px;color:#000;line-height:10px;letter-spacing:-0.22px">4232.581</div><div style="position:absolute;left:788.4px;top:544.245px;width:56.200000000000045px;text-align:right;font-family:'Liberation Sans', sans-serif;font-size:8.5px;color:#000;line-height:10px;letter-spacing:-0.22px">0.000</div><div style="position:absolute;left:641px;top:556.33px;white-space:nowrap;font-family:'Liberation Sans', sans-serif;font-size:8.5px;color:#000;line-height:10px;letter-spacing:-0.22px">127</div><div style="position:absolute;left:668px;top:556.33px;width:55.299999999999955px;text-align:right;font-family:'Liberation Sans', sans-serif;font-size:8.5px;color:#000;line-height:10px;letter-spacing:-0.22px">10989.579</div><div style="position:absolute;left:728.3px;top:556.33px;width:55.60000000000002px;text-align:right;font-family:'Liberation Sans', sans-serif;font-size:8.5px;color:#000;line-height:10px;letter-spacing:-0.22px">4248.628</div><div style="position:absolute;left:788.4px;top:556.33px;width:56.200000000000045px;text-align:right;font-family:'Liberation Sans', sans-serif;font-size:8.5px;color:#000;line-height:10px;letter-spacing:-0.22px">0.000</div><div style="position:absolute;left:641px;top:568.4150000000001px;white-space:nowrap;font-family:'Liberation Sans', sans-serif;font-size:8.5px;color:#000;line-height:10px;letter-spacing:-0.22px">128</div><div style="position:absolute;left:668px;top:568.4150000000001px;width:55.299999999999955px;text-align:right;font-family:'Liberation Sans', sans-serif;font-size:8.5px;color:#000;line-height:10px;letter-spacing:-0.22px">10956.295</div><div style="position:absolute;left:728.3px;top:568.4150000000001px;width:55.60000000000002px;text-align:right;font-family:'Liberation Sans', sans-serif;font-size:8.5px;color:#000;line-height:10px;letter-spacing:-0.22px">4312.631</div><div style="position:absolute;left:788.4px;top:568.4150000000001px;width:56.200000000000045px;text-align:right;font-family:'Liberation Sans', sans-serif;font-size:8.5px;color:#000;line-height:10px;letter-spacing:-0.22px">0.000</div><div style="position:absolute;left:641px;top:580.5px;white-space:nowrap;font-family:'Liberation Sans', sans-serif;font-size:8.5px;color:#000;line-height:10px;letter-spacing:-0.22px">129</div><div style="position:absolute;left:668px;top:580.5px;width:55.299999999999955px;text-align:right;font-family:'Liberation Sans', sans-serif;font-size:8.5px;color:#000;line-height:10px;letter-spacing:-0.22px">11126.341</div><div style="position:absolute;left:728.3px;top:580.5px;width:55.60000000000002px;text-align:right;font-family:'Liberation Sans', sans-serif;font-size:8.5px;color:#000;line-height:10px;letter-spacing:-0.22px">4311.329</div><div style="position:absolute;left:788.4px;top:580.5px;width:56.200000000000045px;text-align:right;font-family:'Liberation Sans', sans-serif;font-size:8.5px;color:#000;line-height:10px;letter-spacing:-0.22px">0.000</div><div style="position:absolute;left:641px;top:592.585px;white-space:nowrap;font-family:'Liberation Sans', sans-serif;font-size:8.5px;color:#000;line-height:10px;letter-spacing:-0.22px">130</div><div style="position:absolute;left:668px;top:592.585px;width:55.299999999999955px;text-align:right;font-family:'Liberation Sans', sans-serif;font-size:8.5px;color:#000;line-height:10px;letter-spacing:-0.22px">11057.896</div><div style="position:absolute;left:728.3px;top:592.585px;width:55.60000000000002px;text-align:right;font-family:'Liberation Sans', sans-serif;font-size:8.5px;color:#000;line-height:10px;letter-spacing:-0.22px">4460.627</div><div style="position:absolute;left:788.4px;top:592.585px;width:56.200000000000045px;text-align:right;font-family:'Liberation Sans', sans-serif;font-size:8.5px;color:#000;line-height:10px;letter-spacing:-0.22px">0.000</div><div style="position:absolute;left:641px;top:604.6700000000001px;white-space:nowrap;font-family:'Liberation Sans', sans-serif;font-size:8.5px;color:#000;line-height:10px;letter-spacing:-0.22px">131</div><div style="position:absolute;left:668px;top:604.6700000000001px;width:55.299999999999955px;text-align:right;font-family:'Liberation Sans', sans-serif;font-size:8.5px;color:#000;line-height:10px;letter-spacing:-0.22px">10911.216</div><div style="position:absolute;left:728.3px;top:604.6700000000001px;width:55.60000000000002px;text-align:right;font-family:'Liberation Sans', sans-serif;font-size:8.5px;color:#000;line-height:10px;letter-spacing:-0.22px">4500.302</div><div style="position:absolute;left:788.4px;top:604.6700000000001px;width:56.200000000000045px;text-align:right;font-family:'Liberation Sans', sans-serif;font-size:8.5px;color:#000;line-height:10px;letter-spacing:-0.22px">0.000</div><div style="position:absolute;left:641px;top:616.7550000000001px;white-space:nowrap;font-family:'Liberation Sans', sans-serif;font-size:8.5px;color:#000;line-height:10px;letter-spacing:-0.22px">132</div><div style="position:absolute;left:668px;top:616.7550000000001px;width:55.299999999999955px;text-align:right;font-family:'Liberation Sans', sans-serif;font-size:8.5px;color:#000;line-height:10px;letter-spacing:-0.22px">10868.053</div><div style="position:absolute;left:728.3px;top:616.7550000000001px;width:55.60000000000002px;text-align:right;font-family:'Liberation Sans', sans-serif;font-size:8.5px;color:#000;line-height:10px;letter-spacing:-0.22px">4438.901</div><div style="position:absolute;left:788.4px;top:616.7550000000001px;width:56.200000000000045px;text-align:right;font-family:'Liberation Sans', sans-serif;font-size:8.5px;color:#000;line-height:10px;letter-spacing:-0.22px">0.000</div><div style="position:absolute;left:641px;top:628.84px;white-space:nowrap;font-family:'Liberation Sans', sans-serif;font-size:8.5px;color:#e8f6ff;line-height:10px;letter-spacing:-0.22px">133</div><div style="position:absolute;left:668px;top:628.84px;width:55.299999999999955px;text-align:right;font-family:'Liberation Sans', sans-serif;font-size:8.5px;color:#e8f6ff;line-height:10px;letter-spacing:-0.22px">10188.638</div><div style="position:absolute;left:728.3px;top:628.84px;width:55.60000000000002px;text-align:right;font-family:'Liberation Sans', sans-serif;font-size:8.5px;color:#e8f6ff;line-height:10px;letter-spacing:-0.22px">4460.658</div><div style="position:absolute;left:788.4px;top:628.84px;width:56.200000000000045px;text-align:right;font-family:'Liberation Sans', sans-serif;font-size:8.5px;color:#e8f6ff;line-height:10px;letter-spacing:-0.22px">0.000</div><div style="position:absolute;left:641px;top:640.9250000000001px;white-space:nowrap;font-family:'Liberation Sans', sans-serif;font-size:8.5px;color:#000;line-height:10px;letter-spacing:-0.22px">134</div><div style="position:absolute;left:668px;top:640.9250000000001px;width:55.299999999999955px;text-align:right;font-family:'Liberation Sans', sans-serif;font-size:8.5px;color:#000;line-height:10px;letter-spacing:-0.22px">11180.883</div><div style="position:absolute;left:728.3px;top:640.9250000000001px;width:55.60000000000002px;text-align:right;font-family:'Liberation Sans', sans-serif;font-size:8.5px;color:#000;line-height:10px;letter-spacing:-0.22px">4336.334</div><div style="position:absolute;left:788.4px;top:640.9250000000001px;width:56.200000000000045px;text-align:right;font-family:'Liberation Sans', sans-serif;font-size:8.5px;color:#000;line-height:10px;letter-spacing:-0.22px">0.000</div><div style="position:absolute;left:641px;top:653.0100000000001px;white-space:nowrap;font-family:'Liberation Sans', sans-serif;font-size:8.5px;color:#000;line-height:10px;letter-spacing:-0.22px">135</div><div style="position:absolute;left:668px;top:653.0100000000001px;width:55.299999999999955px;text-align:right;font-family:'Liberation Sans', sans-serif;font-size:8.5px;color:#000;line-height:10px;letter-spacing:-0.22px">11155.424</div><div style="position:absolute;left:728.3px;top:653.0100000000001px;width:55.60000000000002px;text-align:right;font-family:'Liberation Sans', sans-serif;font-size:8.5px;color:#000;line-height:10px;letter-spacing:-0.22px">4301.890</div><div style="position:absolute;left:788.4px;top:653.0100000000001px;width:56.200000000000045px;text-align:right;font-family:'Liberation Sans', sans-serif;font-size:8.5px;color:#000;line-height:10px;letter-spacing:-0.22px">0.000</div></div><div style="position:absolute;left:667.4px;top:96.2px;width:1px;height:561.8px;background:#9a9a9a"></div><div style="position:absolute;left:727.6999999999999px;top:96.2px;width:1px;height:561.8px;background:#9a9a9a"></div><div style="position:absolute;left:787.8px;top:96.2px;width:1px;height:561.8px;background:#9a9a9a"></div><div style="position:absolute;left:849.0px;top:96.2px;width:1px;height:561.8px;background:#9a9a9a"></div><div style="position:absolute;left:923.9px;top:96.2px;width:1px;height:561.8px;background:#9a9a9a"></div><div style="position:absolute;left:995.9px;top:96.2px;width:1px;height:561.8px;background:#9a9a9a"></div><div style="position:absolute;left:637px;top:96.2px;width:1px;height:561.8px;background:#404040"></div><div style="position:absolute;left:996.5px;top:81px;width:14.5px;height:577px;background:linear-gradient(90deg,#e6e6e6,#f2f2f2 40%,#ececec)"></div><svg style="position:absolute;left:1000px;top:86px" width="7" height="4"><path d="M0 4 L3.5 0 L7 4Z" fill="#505050"/></svg><svg style="position:absolute;left:1000px;top:650px" width="7" height="4"><path d="M0 0 L3.5 4 L7 0Z" fill="#505050"/></svg><div style="position:absolute;left:998px;top:335px;width:10.5px;height:123px;background:linear-gradient(90deg,#f0f0f0,#e0e0e0);border:1px solid #a0a0a0;border-radius:2px;box-sizing:border-box"></div><svg style="position:absolute;left:1000px;top:393px" width="7" height="7"><path d="M1 1.5H6M1 3.5H6M1 5.5H6" stroke="#606060" stroke-width="0.8"/></svg><div style="position:absolute;left:620px;top:658px;width:391px;height:12px;background:linear-gradient(#e8e8e8,#f2f2f2 40%,#ececec)"></div><svg style="position:absolute;left:626px;top:661px" width="4" height="7"><path d="M4 0 L0 3.5 L4 7Z" fill="#505050"/></svg><svg style="position:absolute;left:989px;top:661px" width="4" height="7"><path d="M0 0 L4 3.5 L0 7Z" fill="#505050"/></svg><div style="position:absolute;left:635.5px;top:659px;width:274px;height:10.5px;background:linear-gradient(#f4f4f4,#dcdcdc);border:1px solid #a0a0a0;border-radius:2px;box-sizing:border-box"></div><svg style="position:absolute;left:769px;top:661px" width="7" height="7"><path d="M1.5 1V6M3.5 1V6M5.5 1V6" stroke="#606060" stroke-width="0.8"/></svg>
</body></html>
